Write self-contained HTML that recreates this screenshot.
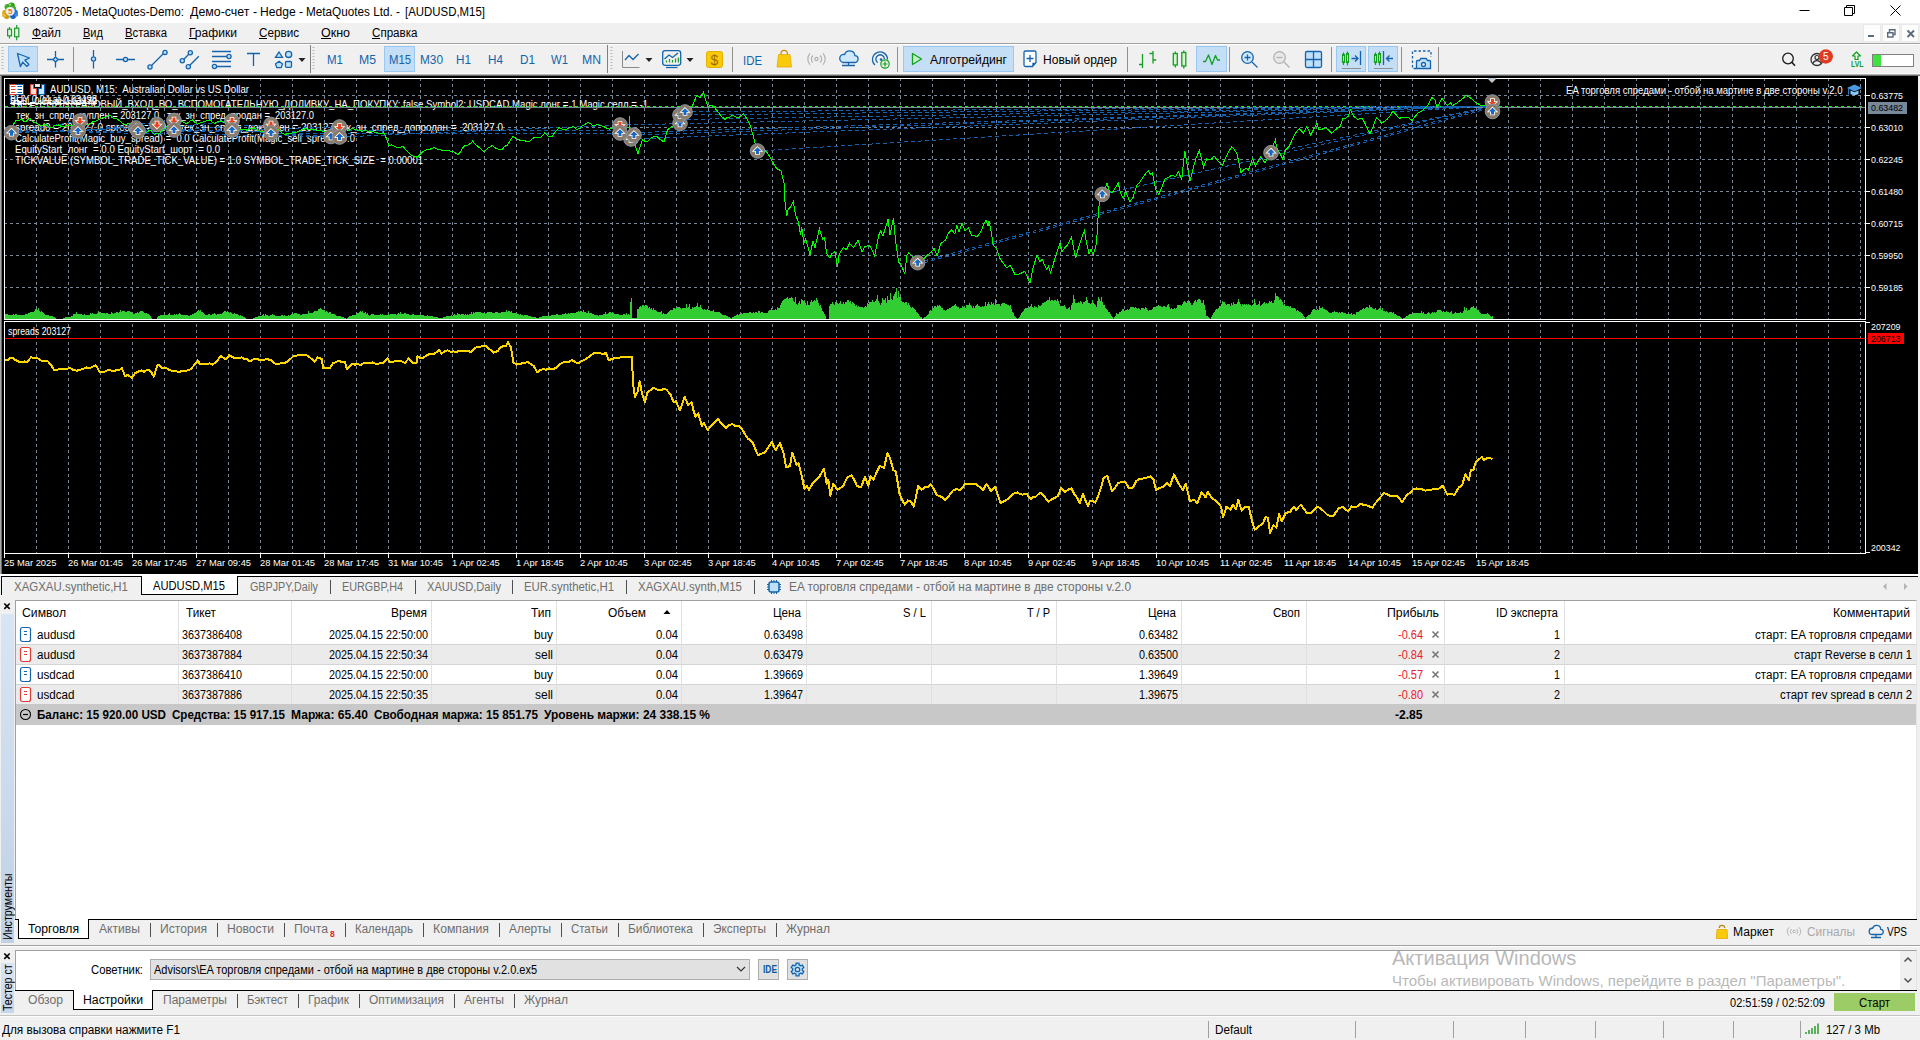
<!DOCTYPE html>
<html><head><meta charset="utf-8"><title>MT5</title>
<style>
*{box-sizing:border-box;margin:0;padding:0}
html,body{width:1920px;height:1040px;overflow:hidden;background:#f0f0f0}
body{position:relative;font-family:"Liberation Sans",sans-serif;font-size:12px;color:#000}
.a{position:absolute;white-space:nowrap;line-height:1}
.t{position:absolute;white-space:pre;line-height:1;transform-origin:0 0}
svg{position:absolute;overflow:visible}
</style></head><body>
<!-- p10_top -->
<div class="a" style="left:0px;top:0px;width:1920px;height:23px;background:#fff;"></div>
<svg style="left:0px;top:0px" width="20" height="22" viewBox="0 0 20 22">
<circle cx="7.5" cy="7" r="3" fill="#3fae2a"/><circle cx="11.5" cy="6" r="3.4" fill="#2ea31c"/><circle cx="13.5" cy="8.5" r="2.6" fill="#3fae2a"/><circle cx="10" cy="4.6" r="1.2" fill="#9be070"/>
<circle cx="5.3" cy="13" r="3.2" fill="#d9a91f"/><circle cx="6.8" cy="16" r="3" fill="#c99a14"/><circle cx="4" cy="15.5" r="2" fill="#e4bb3c"/>
<circle cx="14.5" cy="13" r="3.4" fill="#2572d9"/><circle cx="13" cy="16" r="3" fill="#1b62c4"/><circle cx="16.3" cy="15" r="1.8" fill="#3f8cf0"/>
<circle cx="10.2" cy="11.3" r="4.3" fill="#f4f4f4" stroke="#d8d8d8" stroke-width="0.5"/>
<text x="10.2" y="14.2" font-size="8" font-weight="bold" text-anchor="middle" fill="#e8701a" font-family="Liberation Sans">5</text></svg>
<span class="t" style="left:23.00px;top:5.74px;font-size:12px;color:#000;transform:scaleX(0.9223);">81807205 -</span>
<span class="t" style="left:82.00px;top:5.74px;font-size:12px;color:#000;transform:scaleX(0.9741);">MetaQuotes-Demo:</span>
<span class="t" style="left:190.00px;top:5.74px;font-size:12px;color:#000;transform:scaleX(1.0317);">Демо-счет -</span>
<span class="t" style="left:260.00px;top:5.74px;font-size:12px;color:#000;transform:scaleX(1.0072);">Hedge -</span>
<span class="t" style="left:306.00px;top:5.74px;font-size:12px;color:#000;transform:scaleX(0.9787);">MetaQuotes Ltd. -</span>
<span class="t" style="left:405.00px;top:5.74px;font-size:12px;color:#000;transform:scaleX(0.9522);">[AUDUSD,M15]</span>
<svg style="left:1780px;top:0" width="140" height="23" viewBox="0 0 140 23" fill="none" stroke="#000" stroke-width="1">
<path d="M19.5 10.5h10"/><path d="M64.5 7.5h8v8h-8z M66.5 7.5v-2h8v8h-2"/><path d="M110.5 5.5l10 10M120.5 5.5l-10 10"/></svg>
<div class="a" style="left:0px;top:23px;width:1920px;height:20px;background:#f0f0f0;"></div>
<svg style="left:6px;top:25px" width="14" height="16" viewBox="0 0 14 16" fill="none" stroke="#1c9a2c" stroke-width="1.2">
<path d="M3.5 2v2.200M3.5 10.800v2.700M10.700 0v3.200M10.700 11.800v3.500"/><rect x="1.6" y="4.2" width="3.9" height="6.6" fill="#e4f4e4"/><rect x="8.6" y="3.2" width="4.2" height="8.6" fill="#e4f4e4"/></svg>
<span class="t" style="left:32.00px;top:27.32px;font-size:12.5px;color:#000;transform:scaleX(0.9437);">Файл</span>
<div class="a" style="left:32px;top:38px;width:9px;height:1px;background:#000;"></div>
<span class="t" style="left:83.00px;top:27.32px;font-size:12.5px;color:#000;transform:scaleX(0.8844);">Вид</span>
<div class="a" style="left:83px;top:38px;width:7px;height:1px;background:#000;"></div>
<span class="t" style="left:125.00px;top:27.32px;font-size:12.5px;color:#000;transform:scaleX(0.9040);">Вставка</span>
<div class="a" style="left:125px;top:38px;width:8px;height:1px;background:#000;"></div>
<span class="t" style="left:189.00px;top:27.32px;font-size:12.5px;color:#000;transform:scaleX(0.9660);">Графики</span>
<div class="a" style="left:189px;top:38px;width:7px;height:1px;background:#000;"></div>
<span class="t" style="left:259.00px;top:27.32px;font-size:12.5px;color:#000;transform:scaleX(0.9345);">Сервис</span>
<div class="a" style="left:259px;top:38px;width:8px;height:1px;background:#000;"></div>
<span class="t" style="left:321.00px;top:27.32px;font-size:12.5px;color:#000;">Окно</span>
<div class="a" style="left:321px;top:38px;width:10px;height:1px;background:#000;"></div>
<span class="t" style="left:372.00px;top:27.32px;font-size:12.5px;color:#000;transform:scaleX(0.9279);">Справка</span>
<div class="a" style="left:372px;top:38px;width:8px;height:1px;background:#000;"></div>
<svg style="left:1860px;top:24px" width="60" height="19" viewBox="0 0 60 19">
<rect x="3.5" y="0.5" width="17" height="17" fill="#fdfdfd" stroke="#e9e9e9"/><rect x="22.500" y="0.5" width="17" height="17" fill="#fdfdfd" stroke="#e9e9e9"/><rect x="41.500" y="0.5" width="17" height="17" fill="#fdfdfd" stroke="#e9e9e9"/>
<path d="M8 12h6" stroke="#5a6b80" stroke-width="2"/>
<path d="M27.700 8.700h5.300v4.300h-5.300z M29.500 8.500v-2.800h5.500v4.800h-2" fill="none" stroke="#5a6b80" stroke-width="1.400"/>
<path d="M47.500 6.500l6.500 6.500M54 6.500l-6.500 6.500" stroke="#5a6b80" stroke-width="1.900"/></svg>
<div class="a" style="left:0px;top:43px;width:1920px;height:1px;background:#a0a0a0;"></div>
<div class="a" style="left:0px;top:44px;width:1920px;height:1px;background:#fff;"></div>
<div class="a" style="left:0px;top:45px;width:1920px;height:30px;background:#f0f0f0;"></div>
<!-- p11_toolbar -->
<svg style="left:0;top:0" width="1920" height="76" viewBox="0 0 1920 76" fill="none" stroke-linecap="butt">
<path d="M2.5 47v24" stroke="#b8b8b8" stroke-width="2" stroke-dasharray="1 2"/>
<path d="M313.5 47v24" stroke="#b8b8b8" stroke-width="2" stroke-dasharray="1 2"/>
<path d="M611.5 47v24" stroke="#b8b8b8" stroke-width="2" stroke-dasharray="1 2"/>
<path d="M73.5 47v25" stroke="#909090" stroke-width="1"/>
<path d="M310.5 45v29" stroke="#808080" stroke-width="1"/>
<path d="M607.5 45v29" stroke="#808080" stroke-width="1"/>
<path d="M732.5 47v25" stroke="#909090" stroke-width="1"/>
<path d="M897.5 47v25" stroke="#909090" stroke-width="1"/>
<path d="M1127.5 47v25" stroke="#909090" stroke-width="1"/>
<path d="M1229.5 47v25" stroke="#909090" stroke-width="1"/>
<path d="M1331.5 47v25" stroke="#909090" stroke-width="1"/>
<path d="M1401.5 47v25" stroke="#909090" stroke-width="1"/>
<path d="M1438.5 47v25" stroke="#909090" stroke-width="1"/>
<rect x="8.5" y="46.5" width="29" height="25" fill="#c4def5" stroke="#99c9f2"/>
<rect x="384.5" y="46.5" width="30" height="25" fill="#c4def5" stroke="#99c9f2"/>
<rect x="903.5" y="46.5" width="110" height="25" fill="#c4def5" stroke="#99c9f2"/>
<rect x="1196.5" y="46.5" width="30" height="25" fill="#c4def5" stroke="#99c9f2"/>
<rect x="1336.5" y="46.5" width="29" height="25" fill="#c4def5" stroke="#99c9f2"/>
<rect x="1368.5" y="46.5" width="29" height="25" fill="#c4def5" stroke="#99c9f2"/>
<path d="M17.5 53.5l12 4.5-4.6 2.2 4 4.2-2.2 2-4-4.2-2.3 4.4z" stroke="#1464ad" stroke-width="1.3" stroke-linejoin="round" fill="#bfe0fb"/>
<path d="M55.5 51v5.5M55.5 61.5v6M47 59.5h6M58 59.5h6" stroke="#1464ad" stroke-width="1.3"/><path d="M55.5 57l2.5 2.5-2.5 2.5-2.5-2.5z" stroke="#1464ad" stroke-width="1.3" fill="#bfe0fb"/>
<path d="M93.5 50v6.5M93.5 61.5v7" stroke="#1464ad" stroke-width="1.3"/><circle cx="93.5" cy="59" r="2.1" stroke="#1464ad" stroke-width="1.3" fill="#bfe0fb"/>
<path d="M116 59.5h7M128 59.5h7" stroke="#1464ad" stroke-width="1.3"/><circle cx="125.5" cy="59.5" r="2.1" stroke="#1464ad" stroke-width="1.3" fill="#bfe0fb"/>
<path d="M151.5 65.5l12-12" stroke="#1464ad" stroke-width="1.3"/><circle cx="150" cy="67" r="2.1" stroke="#1464ad" stroke-width="1.3" fill="#bfe0fb"/><circle cx="165" cy="52.5" r="2.1" stroke="#1464ad" stroke-width="1.3" fill="#bfe0fb"/>
<path d="M183.8 59.2l5-5M189.8 65.2l9-9" stroke="#1464ad" stroke-width="1.3"/><circle cx="182.3" cy="60.7" r="2.1" stroke="#1464ad" stroke-width="1.3" fill="#bfe0fb"/><circle cx="190.3" cy="52.7" r="2.1" stroke="#1464ad" stroke-width="1.3" fill="#bfe0fb"/><circle cx="188.3" cy="66.7" r="2.1" stroke="#1464ad" stroke-width="1.3" fill="#bfe0fb"/>
<path d="M212 51.5h19M212 56.5h15M212 61.5h19M217 66.5h14" stroke="#1464ad" stroke-width="1.3"/><circle cx="229" cy="56.5" r="2.1" stroke="#1464ad" stroke-width="1.3" fill="#bfe0fb"/><circle cx="214.5" cy="66.5" r="2.1" stroke="#1464ad" stroke-width="1.3" fill="#bfe0fb"/>
<path d="M247 53.5h13M253.5 53.5v12.5" stroke="#1464ad" stroke-width="1.3"/>
<path d="M279 52l3.500 5.300h-7z" stroke="#1464ad" stroke-width="1.3" fill="#bfe0fb"/><circle cx="288.600" cy="54.400" r="3.100" stroke="#1464ad" stroke-width="1.3" fill="#bfe0fb"/><path d="M279 61.300l3.500 2.600-1.300 3.800h-4.400l-1.300-3.800z" stroke="#1464ad" stroke-width="1.3" fill="#bfe0fb"/><rect x="285.500" y="61.500" width="6" height="5.800" rx="1" stroke="#1464ad" stroke-width="1.3" fill="#bfe0fb"/>
<path d="M298.5 58h7l-3.5 4z" fill="#222"/>
<path d="M622.5 51v16.5h17" stroke="#8a8a8a" stroke-width="1"/><path d="M625 60l4-4.5 4 4 5.5-5.5" stroke="#1464ad" stroke-width="1.3"/>
<path d="M645.5 58h7l-3.5 4z" fill="#222"/>
<rect x="662.7" y="50.7" width="18" height="14.6" rx="2.5" stroke="#1464ad" stroke-width="1.3"/><path d="M666 67.5h11.5" stroke="#1464ad" stroke-width="1.3"/><path d="M664.5 59l4.5-4 3.5 2.5 5.5-4.5" stroke="#1464ad" stroke-width="1.3" stroke-width="1.1"/><path d="M666.5 62.5v-2M669.5 62.5v-3.5M672.5 62.5v-2.5M675.5 62.5v-4M678.3 62.5v-5" stroke="#12a01e" stroke-width="1.2"/>
<path d="M686.5 58h7l-3.5 4z" fill="#222"/>
<rect x="706.5" y="51.5" width="16" height="16" rx="2" fill="#f9ca0a" stroke="#e6b000"/>
<path d="M781 55v-1.500a3.200 3.200 0 0 1 6.400 0v1.500" stroke="#d08a00" stroke-width="1.200"/><path d="M778.500 54.500h11.500l1.500 12.500h-14.500z" fill="#f9ca0a" stroke="#e6a800" stroke-width="0.8"/>
<circle cx="816.5" cy="59" r="1.6" stroke="#b0b0b0" stroke-width="1.2"/><path d="M812.8 55.5a5 5 0 0 0 0 7M820.2 55.5a5 5 0 0 1 0 7M810 53.3a8.5 8.5 0 0 0 0 11.4M823 53.3a8.5 8.5 0 0 1 0 11.4" stroke="#b0b0b0" stroke-width="1.2"/>
<path d="M843 62.5h11.5a3.4 3.4 0 0 0 .4-6.8 5.3 5.3 0 0 0-10.3-1.2 4 4 0 0 0-1.6 8z" stroke="#1464ad" stroke-width="1.3" fill="#cfe8fb"/><path d="M848.5 62.5v3M842 65.5h13" stroke="#1464ad" stroke-width="1.3"/>
<path d="M875 65a7.5 7.5 0 1 1 12.5-5.5M877.6 62.6a4.3 4.3 0 1 1 6.8-3.6" stroke="#1464ad" stroke-width="1.3"/><circle cx="881" cy="59.5" r="1.3" fill="#1464ad"/><circle cx="885" cy="64" r="4.2" fill="#f0f0f0" stroke="#12a01e" stroke-width="1.2"/><path d="M885 61.5v5M882.5 64h5" stroke="#12a01e" stroke-width="1.2"/>
<path d="M912.5 53.5l9 5.5-9 5.5z" stroke="#12a01e" stroke-width="1.3" stroke-linejoin="round" fill="#c4efc4"/>
<path d="M1024 52.5a1.5 1.5 0 0 1 1.5-1.5h9a1.5 1.5 0 0 1 1.5 1.5v10l-3.5 4h-7a1.5 1.5 0 0 1-1.5-1.5z" stroke="#1464ad" stroke-width="1.3" fill="#fff"/><path d="M1030 55v7M1026.5 58.5h7" stroke="#1464ad" stroke-width="1.3"/><path d="M1036 62.5l-3.5 4z" fill="#1464ad"/><path d="M1032.3 66.5v-3.8h3.6z" fill="#1464ad"/>
<path d="M1142.500 54v14M1139 64.500h3.500M1153 51v12.500M1149.500 53.500h3.500M1153 60h3.200" stroke="#12a01e" stroke-width="1.3"/>
<path d="M1175.300 51.500v2M1175.300 65v2.500M1183.800 50.500v2M1183.800 66v2.500" stroke="#12a01e" stroke-width="1.3"/><rect x="1173.300" y="53.500" width="4" height="11.500" stroke="#12a01e" stroke-width="1.3" fill="#d8f5d8"/><rect x="1181.800" y="52.500" width="4" height="13.500" stroke="#12a01e" stroke-width="1.3" fill="#d8f5d8"/>
<path d="M1203 61.500h2.500l3-6.500 3.500 9.500 3.500-9 2 4.500h2.500" stroke="#12a01e" stroke-width="1.3" stroke-linejoin="round"/>
<circle cx="1247.500" cy="57.500" r="5.800" stroke="#1464ad" stroke-width="1.3" fill="#cfe8fb"/><path d="M1252 62l5.500 5.500" stroke="#1464ad" stroke-width="1.3" stroke-width="1.600"/><path d="M1244.500 57.500h6M1247.500 54.500v6" stroke="#1464ad" stroke-width="1.3"/>
<circle cx="1279.500" cy="57.500" r="5.800" stroke="#b0b0b0" stroke-width="1.2" fill="#e8e8e8"/><path d="M1284 62l5.500 5.500" stroke="#b0b0b0" stroke-width="1.2" stroke-width="1.600"/><path d="M1276.500 57.500h6" stroke="#b0b0b0" stroke-width="1.2"/>
<rect x="1305.500" y="51.500" width="16" height="16" rx="1.500" stroke="#1464ad" stroke-width="1.3" fill="#bfe0fb"/><path d="M1313.500 51.500v16M1305.500 59.500h16" stroke="#1464ad" stroke-width="1.3"/>
<rect x="1342.500" y="54.500" width="2" height="8" stroke="#12a01e" stroke-width="1.100" fill="#d8f5d8"/><rect x="1346.500" y="53.500" width="2" height="9" stroke="#12a01e" stroke-width="1.100" fill="#d8f5d8"/><path d="M1343.500 52.500v2M1343.500 62.500v2.500M1347.500 51.500v2M1347.500 62.500v3" stroke="#12a01e" stroke-width="1.100"/><path d="M1351.500 58.500h6.500M1355 55.500l3 3-3 3" stroke="#1464ad" stroke-width="1.3"/><path d="M1360.500 51v14" stroke="#1464ad" stroke-width="1.3"/><path d="M1342 68.500h19" stroke="#909090"/>
<rect x="1374.500" y="54.500" width="2" height="8" stroke="#12a01e" stroke-width="1.100" fill="#d8f5d8"/><rect x="1378.500" y="53.500" width="2" height="9" stroke="#12a01e" stroke-width="1.100" fill="#d8f5d8"/><path d="M1375.500 52.500v2M1375.500 62.500v2.500M1379.500 51.500v2M1379.500 62.500v3" stroke="#12a01e" stroke-width="1.100"/><path d="M1383.500 51v14" stroke="#1464ad" stroke-width="1.3"/><path d="M1386.500 58.500h6.500M1389.500 55.500l-3 3 3 3" stroke="#1464ad" stroke-width="1.3"/><path d="M1374 68.500h19" stroke="#909090"/>
<path d="M1416 68.500h-3.500v-17.500h18.500v6" stroke="#1464ad" stroke-width="1.3" stroke-dasharray="2.500 2"/><path d="M1417.500 60.500h2l1.300-2h5.400l1.300 2h2a1 1 0 0 1 1 1v7h-14v-7a1 1 0 0 1 1-1z" fill="#bfe0fb" stroke="#1464ad" stroke-width="1.3"/><circle cx="1423.500" cy="64.500" r="2" stroke="#1464ad" stroke-width="1.3" fill="#f0f0f0"/>
<circle cx="1788" cy="58.500" r="5.300" stroke="#1a1a1a" stroke-width="1.300"/><path d="M1791.800 62.300l3.200 3.400" stroke="#1a1a1a" stroke-width="1.600"/>
<circle cx="1817" cy="59.500" r="6" stroke="#333" stroke-width="1.3"/><circle cx="1817" cy="57.500" r="2" stroke="#333" stroke-width="1.2"/><path d="M1812.800 63.500a4.500 4.500 0 0 1 8.400 0" stroke="#333" stroke-width="1.2"/><circle cx="1825.800" cy="56.500" r="7.200" fill="#e03a24"/>
<path d="M1856.500 52l4 4h-2.500v3.500h-3v-3.500h-2.500z" stroke="#12a01e" stroke-width="1.200" stroke-linejoin="round"/>
<rect x="1872.500" y="54.500" width="41" height="12" fill="#fff" stroke="#808080"/><rect x="1873" y="55" width="8" height="11" fill="#40e040"/>
</svg>
<span class="t" style="left:327.00px;top:53.40px;font-size:13px;color:#1464ad;transform:scaleX(0.8860);">M1</span>
<span class="t" style="left:359.00px;top:53.40px;font-size:13px;color:#1464ad;transform:scaleX(0.9413);">M5</span>
<span class="t" style="left:389.00px;top:53.40px;font-size:13px;color:#1464ad;transform:scaleX(0.8699);">M15</span>
<span class="t" style="left:420.00px;top:53.40px;font-size:13px;color:#1464ad;transform:scaleX(0.9095);">M30</span>
<span class="t" style="left:456.00px;top:53.40px;font-size:13px;color:#1464ad;transform:scaleX(0.9027);">H1</span>
<span class="t" style="left:488.00px;top:53.40px;font-size:13px;color:#1464ad;transform:scaleX(0.9027);">H4</span>
<span class="t" style="left:520.00px;top:53.40px;font-size:13px;color:#1464ad;transform:scaleX(0.9027);">D1</span>
<span class="t" style="left:551.00px;top:53.40px;font-size:13px;color:#1464ad;transform:scaleX(0.8718);">W1</span>
<span class="t" style="left:582.00px;top:53.40px;font-size:13px;color:#1464ad;transform:scaleX(0.9398);">MN</span>
<span class="t" style="left:743.00px;top:54.74px;font-size:12px;color:#1464ad;transform:scaleX(0.9498);">IDE</span>
<span class="t" style="left:710.60px;top:53.05px;font-size:14px;color:#a06c00;">$</span>
<span class="t" style="left:930.00px;top:54.32px;font-size:12.5px;color:#000;transform:scaleX(0.9754);">Алготрейдинг</span>
<span class="t" style="left:1043.00px;top:54.32px;font-size:12.5px;color:#000;transform:scaleX(0.9626);">Новый ордер</span>
<span class="t" style="left:1823.00px;top:51.17px;font-size:11.5px;color:#fff;transform:scaleX(0.8756);">5</span>
<span class="t" style="left:1850.50px;top:60.00px;font-size:8.5px;color:#12a01e;font-weight:bold;transform:scaleX(0.8105);">LVL</span>
<!-- p20_chart -->
<div class="a" style="left:0px;top:73px;width:1920px;height:1px;background:#f8f8f8;"></div>
<div class="a" style="left:0px;top:74px;width:1920px;height:1px;background:#b4b4b4;"></div>
<div class="a" style="left:0px;top:75px;width:1920px;height:1px;background:#6a6a6a;"></div>
<div class="a" style="left:0px;top:76px;width:1918px;height:498px;background:#000;"></div>
<div class="a" style="left:0px;top:76px;width:1px;height:498px;background:#a8a8a8;"></div>
<div class="a" style="left:1px;top:76px;width:1px;height:498px;background:#6a6a6a;"></div>
<div class="a" style="left:1918px;top:76px;width:2px;height:498px;background:#f4f4f4;"></div>
<svg style="left:0;top:0" width="1920" height="576" viewBox="0 0 1920 576" fill="none" shape-rendering="crispEdges">
<path d="M36.5 78V319M36.5 324V553M68.5 78V319M68.5 324V553M100.5 78V319M100.5 324V553M132.5 78V319M132.5 324V553M164.5 78V319M164.5 324V553M196.5 78V319M196.5 324V553M228.5 78V319M228.5 324V553M260.5 78V319M260.5 324V553M292.5 78V319M292.5 324V553M324.5 78V319M324.5 324V553M356.5 78V319M356.5 324V553M388.5 78V319M388.5 324V553M420.5 78V319M420.5 324V553M452.5 78V319M452.5 324V553M484.5 78V319M484.5 324V553M516.5 78V319M516.5 324V553M548.5 78V319M548.5 324V553M580.5 78V319M580.5 324V553M612.5 78V319M612.5 324V553M644.5 78V319M644.5 324V553M676.5 78V319M676.5 324V553M708.5 78V319M708.5 324V553M740.5 78V319M740.5 324V553M772.5 78V319M772.5 324V553M804.5 78V319M804.5 324V553M836.5 78V319M836.5 324V553M868.5 78V319M868.5 324V553M900.5 78V319M900.5 324V553M932.5 78V319M932.5 324V553M964.5 78V319M964.5 324V553M996.5 78V319M996.5 324V553M1028.5 78V319M1028.5 324V553M1060.5 78V319M1060.5 324V553M1092.5 78V319M1092.5 324V553M1124.5 78V319M1124.5 324V553M1156.5 78V319M1156.5 324V553M1188.5 78V319M1188.5 324V553M1220.5 78V319M1220.5 324V553M1252.5 78V319M1252.5 324V553M1284.5 78V319M1284.5 324V553M1316.5 78V319M1316.5 324V553M1348.5 78V319M1348.5 324V553M1380.5 78V319M1380.5 324V553M1412.5 78V319M1412.5 324V553M1444.5 78V319M1444.5 324V553M1476.5 78V319M1476.5 324V553M1508.5 78V319M1508.5 324V553M1540.5 78V319M1540.5 324V553M1572.5 78V319M1572.5 324V553M1604.5 78V319M1604.5 324V553M1636.5 78V319M1636.5 324V553M1668.5 78V319M1668.5 324V553M1700.5 78V319M1700.5 324V553M1732.5 78V319M1732.5 324V553M1764.5 78V319M1764.5 324V553M1796.5 78V319M1796.5 324V553M1828.5 78V319M1828.5 324V553M1860.5 78V319M1860.5 324V553" stroke="#778899" stroke-dasharray="3 3"/>
<path d="M4 95.5H1865M4 127.5H1865M4 159.5H1865M4 191.5H1865M4 223.5H1865M4 255.5H1865M4 287.5H1865" stroke="#778899" stroke-dasharray="3 3"/>
<path d="M4.5 78.5H1865.5V319.5H4.5z" stroke="#fff"/>
<path d="M4.5 321.5H1865.5V553.5H4.5z" stroke="#fff"/>
<path d="M1866 95.5h4M1866 127.5h4M1866 159.5h4M1866 191.5h4M1866 223.5h4M1866 255.5h4M1866 287.5h4M1866 322.5h4M1866 552.5h4M4.5 553v5M68.5 553v5M132.5 553v5M196.5 553v5M260.5 553v5M324.5 553v5M388.5 553v5M452.5 553v5M516.5 553v5M580.5 553v5M644.5 553v5M708.5 553v5M772.5 553v5M836.5 553v5M900.5 553v5M964.5 553v5M1028.5 553v5M1092.5 553v5M1156.5 553v5M1220.5 553v5M1284.5 553v5M1348.5 553v5M1412.5 553v5M1476.5 553v5" stroke="#fff"/>
</svg>
<span class="t" style="left:1871.00px;top:91.46px;font-size:9.5px;color:#fff;transform:scaleX(0.9320);">0.63775</span>
<span class="t" style="left:1871.00px;top:123.46px;font-size:9.5px;color:#fff;transform:scaleX(0.9320);">0.63010</span>
<span class="t" style="left:1871.00px;top:155.46px;font-size:9.5px;color:#fff;transform:scaleX(0.9320);">0.62245</span>
<span class="t" style="left:1871.00px;top:187.46px;font-size:9.5px;color:#fff;transform:scaleX(0.9320);">0.61480</span>
<span class="t" style="left:1871.00px;top:219.46px;font-size:9.5px;color:#fff;transform:scaleX(0.9320);">0.60715</span>
<span class="t" style="left:1871.00px;top:251.46px;font-size:9.5px;color:#fff;transform:scaleX(0.9320);">0.59950</span>
<span class="t" style="left:1871.00px;top:283.46px;font-size:9.5px;color:#fff;transform:scaleX(0.9320);">0.59185</span>
<div class="a" style="left:1868px;top:102px;width:39px;height:12px;background:#778899;"></div>
<span class="t" style="left:1871.00px;top:103.46px;font-size:9.5px;color:#000;transform:scaleX(0.9320);">0.63482</span>
<span class="t" style="left:1871.00px;top:322.46px;font-size:9.5px;color:#fff;transform:scaleX(0.9307);">207209</span>
<span class="t" style="left:1871.00px;top:543.46px;font-size:9.5px;color:#fff;transform:scaleX(0.9307);">200342</span>
<div class="a" style="left:1868px;top:333px;width:36px;height:11px;background:#ff0000;"></div>
<span class="t" style="left:1871.00px;top:334.46px;font-size:9.5px;color:#000;transform:scaleX(0.9307);">206713</span>
<span class="t" style="left:4.00px;top:558.46px;font-size:9.5px;color:#fff;transform:scaleX(0.9830);">25 Mar 2025</span>
<span class="t" style="left:68.00px;top:558.46px;font-size:9.5px;color:#fff;transform:scaleX(0.9830);">26 Mar 01:45</span>
<span class="t" style="left:132.00px;top:558.46px;font-size:9.5px;color:#fff;transform:scaleX(0.9830);">26 Mar 17:45</span>
<span class="t" style="left:196.00px;top:558.46px;font-size:9.5px;color:#fff;transform:scaleX(0.9830);">27 Mar 09:45</span>
<span class="t" style="left:260.00px;top:558.46px;font-size:9.5px;color:#fff;transform:scaleX(0.9830);">28 Mar 01:45</span>
<span class="t" style="left:324.00px;top:558.46px;font-size:9.5px;color:#fff;transform:scaleX(0.9830);">28 Mar 17:45</span>
<span class="t" style="left:388.00px;top:558.46px;font-size:9.5px;color:#fff;transform:scaleX(0.9830);">31 Mar 10:45</span>
<span class="t" style="left:452.00px;top:558.46px;font-size:9.5px;color:#fff;transform:scaleX(0.9830);">1 Apr 02:45</span>
<span class="t" style="left:516.00px;top:558.46px;font-size:9.5px;color:#fff;transform:scaleX(0.9830);">1 Apr 18:45</span>
<span class="t" style="left:580.00px;top:558.46px;font-size:9.5px;color:#fff;transform:scaleX(0.9830);">2 Apr 10:45</span>
<span class="t" style="left:644.00px;top:558.46px;font-size:9.5px;color:#fff;transform:scaleX(0.9830);">3 Apr 02:45</span>
<span class="t" style="left:708.00px;top:558.46px;font-size:9.5px;color:#fff;transform:scaleX(0.9830);">3 Apr 18:45</span>
<span class="t" style="left:772.00px;top:558.46px;font-size:9.5px;color:#fff;transform:scaleX(0.9830);">4 Apr 10:45</span>
<span class="t" style="left:836.00px;top:558.46px;font-size:9.5px;color:#fff;transform:scaleX(0.9830);">7 Apr 02:45</span>
<span class="t" style="left:900.00px;top:558.46px;font-size:9.5px;color:#fff;transform:scaleX(0.9830);">7 Apr 18:45</span>
<span class="t" style="left:964.00px;top:558.46px;font-size:9.5px;color:#fff;transform:scaleX(0.9830);">8 Apr 10:45</span>
<span class="t" style="left:1028.00px;top:558.46px;font-size:9.5px;color:#fff;transform:scaleX(0.9830);">9 Apr 02:45</span>
<span class="t" style="left:1092.00px;top:558.46px;font-size:9.5px;color:#fff;transform:scaleX(0.9830);">9 Apr 18:45</span>
<span class="t" style="left:1156.00px;top:558.46px;font-size:9.5px;color:#fff;transform:scaleX(0.9830);">10 Apr 10:45</span>
<span class="t" style="left:1220.00px;top:558.46px;font-size:9.5px;color:#fff;transform:scaleX(0.9830);">11 Apr 02:45</span>
<span class="t" style="left:1284.00px;top:558.46px;font-size:9.5px;color:#fff;transform:scaleX(0.9830);">11 Apr 18:45</span>
<span class="t" style="left:1348.00px;top:558.46px;font-size:9.5px;color:#fff;transform:scaleX(0.9830);">14 Apr 10:45</span>
<span class="t" style="left:1412.00px;top:558.46px;font-size:9.5px;color:#fff;transform:scaleX(0.9830);">15 Apr 02:45</span>
<span class="t" style="left:1476.00px;top:558.46px;font-size:9.5px;color:#fff;transform:scaleX(0.9830);">15 Apr 18:45</span>
<!-- p21_lines -->
<span class="t" style="left:50.00px;top:84.31px;font-size:10.5px;color:#fff;transform:scaleX(0.9168);">AUDUSD, M15:  Australian Dollar vs US Dollar</span>
<span class="t" style="left:10.00px;top:93.51px;font-size:10.5px;color:#fff;transform:scaleX(0.8942);">BUY 0.04 at 0.63498</span>
<span class="t" style="left:10.00px;top:95.51px;font-size:10.5px;color:#fff;transform:scaleX(0.8598);">SELL 0.04 at 0.63479</span>
<div class="a" style="left:10px;top:103px;width:87px;height:1px;background:#fff;"></div>
<span class="t" style="left:13.00px;top:99.01px;font-size:10.5px;color:#fff;transform:scaleX(0.9150);">ПС = 15920.0 РАЗОВЫЙ_ВХОД_ВО_ВСПОМОГАТЕЛЬНУЮ_ДОЛИВКУ_НА_ПОКУПКУ: false Symbol2: USDCAD Magic лонг = 1 Magic селл = -1</span>
<span class="t" style="left:16.00px;top:110.01px;font-size:10.5px;color:#fff;transform:scaleX(0.8895);">тек_зн_спред_куплен = 203127.0   тек_зн_спред_продан =  203127.0</span>
<span class="t" style="left:15.00px;top:121.51px;font-size:10.5px;color:#fff;transform:scaleX(0.9383);">spread0 = 203127.0 spread2 = 1.0  0 тек_зн_спред_докуплен = 203127 тек_зн_спред_допродан =  203127.0</span>
<span class="t" style="left:15.00px;top:132.51px;font-size:10.5px;color:#fff;transform:scaleX(0.9025);">CalculateProfit(Magic_buy_spread) =  0.0 CalculateProfit(Magic_sell_spread) 0.0</span>
<span class="t" style="left:15.00px;top:143.51px;font-size:10.5px;color:#fff;transform:scaleX(0.9207);">EquityStart_лонг  = 0.0 EquityStart_шорт  = 0.0</span>
<span class="t" style="left:15.00px;top:154.51px;font-size:10.5px;color:#fff;transform:scaleX(0.9100);">TICKVALUE (SYMBOL_TRADE_TICK_VALUE) = 1.0 SYMBOL_TRADE_TICK_SIZE  = 0.00001</span>
<span class="t" style="left:8.00px;top:325.71px;font-size:10.5px;color:#fff;transform:scaleX(0.8366);">spreads 203127</span>
<span class="t" style="left:1565.50px;top:84.71px;font-size:10.5px;color:#fff;transform:scaleX(0.9125);">EA торговля спредами - отбой на мартине в две стороны v.2.0</span>
<svg style="left:0;top:0" width="1920" height="576" viewBox="0 0 1920 576" fill="none">
<path d="M5 319L5 314L6 314L6 314L7 314L7 314L8 314L8 315L9 315L9 315L10 315L10 315L11 315L11 315L12 315L12 315L13 315L13 314L14 314L14 315L15 315L15 314L16 314L16 314L17 314L17 315L18 315L18 315L19 315L19 315L20 315L20 315L21 315L21 315L22 315L22 315L23 315L23 315L24 315L24 315L25 315L25 314L26 314L26 314L27 314L27 314L28 314L28 313L29 313L29 313L30 313L30 312L31 312L31 312L32 312L32 312L33 312L33 312L34 312L34 311L35 311L35 309L36 309L36 309L37 309L37 310L38 310L38 308L39 308L39 311L40 311L40 312L41 312L41 311L42 311L42 312L43 312L43 313L44 313L44 314L45 314L45 315L46 315L46 315L47 315L47 315L48 315L48 315L49 315L49 316L50 316L50 316L51 316L51 316L52 316L52 316L53 316L53 317L54 317L54 317L55 317L55 318L56 318L56 319L57 319L57 319L58 319L58 319L59 319L59 319L60 319L60 319L61 319L61 319L62 319L62 319L63 319L63 318L64 318L64 318L65 318L65 317L66 317L66 317L67 317L67 317L68 317L68 317L69 317L69 317L70 317L70 317L71 317L71 316L72 316L72 316L73 316L73 314L74 314L74 314L75 314L75 314L76 314L76 312L77 312L77 314L78 314L78 314L79 314L79 314L80 314L80 314L81 314L81 314L82 314L82 315L83 315L83 315L84 315L84 314L85 314L85 315L86 315L86 315L87 315L87 315L88 315L88 315L89 315L89 315L90 315L90 313L91 313L91 314L92 314L92 313L93 313L93 314L94 314L94 314L95 314L95 314L96 314L96 314L97 314L97 313L98 313L98 311L99 311L99 312L100 312L100 313L101 313L101 313L102 313L102 313L103 313L103 313L104 313L104 313L105 313L105 314L106 314L106 313L107 313L107 313L108 313L108 314L109 314L109 314L110 314L110 314L111 314L111 312L112 312L112 313L113 313L113 314L114 314L114 313L115 313L115 313L116 313L116 312L117 312L117 312L118 312L118 313L119 313L119 312L120 312L120 310L121 310L121 312L122 312L122 311L123 311L123 311L124 311L124 311L125 311L125 312L126 312L126 312L127 312L127 311L128 311L128 311L129 311L129 311L130 311L130 312L131 312L131 312L132 312L132 313L133 313L133 314L134 314L134 314L135 314L135 313L136 313L136 313L137 313L137 312L138 312L138 313L139 313L139 312L140 312L140 311L141 311L141 311L142 311L142 311L143 311L143 312L144 312L144 313L145 313L145 313L146 313L146 313L147 313L147 314L148 314L148 314L149 314L149 315L150 315L150 316L151 316L151 318L152 318L152 319L153 319L153 319L154 319L154 319L155 319L155 319L156 319L156 319L157 319L157 317L158 317L158 316L159 316L159 316L160 316L160 315L161 315L161 315L162 315L162 315L163 315L163 315L164 315L164 315L165 315L165 315L166 315L166 315L167 315L167 315L168 315L168 314L169 314L169 313L170 313L170 315L171 315L171 315L172 315L172 315L173 315L173 315L174 315L174 314L175 314L175 315L176 315L176 314L177 314L177 315L178 315L178 314L179 314L179 313L180 313L180 314L181 314L181 315L182 315L182 315L183 315L183 315L184 315L184 315L185 315L185 315L186 315L186 315L187 315L187 315L188 315L188 316L189 316L189 316L190 316L190 315L191 315L191 315L192 315L192 314L193 314L193 314L194 314L194 313L195 313L195 313L196 313L196 312L197 312L197 311L198 311L198 310L199 310L199 311L200 311L200 310L201 310L201 312L202 312L202 312L203 312L203 313L204 313L204 314L205 314L205 315L206 315L206 315L207 315L207 315L208 315L208 314L209 314L209 314L210 314L210 315L211 315L211 315L212 315L212 314L213 314L213 314L214 314L214 313L215 313L215 314L216 314L216 315L217 315L217 314L218 314L218 314L219 314L219 314L220 314L220 314L221 314L221 314L222 314L222 313L223 313L223 312L224 312L224 311L225 311L225 311L226 311L226 312L227 312L227 311L228 311L228 312L229 312L229 313L230 313L230 312L231 312L231 313L232 313L232 314L233 314L233 314L234 314L234 313L235 313L235 314L236 314L236 314L237 314L237 314L238 314L238 315L239 315L239 316L240 316L240 315L241 315L241 316L242 316L242 316L243 316L243 317L244 317L244 317L245 317L245 318L246 318L246 319L247 319L247 319L248 319L248 319L249 319L249 319L250 319L250 319L251 319L251 319L252 319L252 319L253 319L253 318L254 318L254 318L255 318L255 317L256 317L256 317L257 317L257 317L258 317L258 316L259 316L259 316L260 316L260 316L261 316L261 316L262 316L262 315L263 315L263 314L264 314L264 316L265 316L265 314L266 314L266 315L267 315L267 315L268 315L268 316L269 316L269 316L270 316L270 315L271 315L271 315L272 315L272 314L273 314L273 315L274 315L274 315L275 315L275 316L276 316L276 316L277 316L277 316L278 316L278 316L279 316L279 316L280 316L280 316L281 316L281 315L282 315L282 315L283 315L283 316L284 316L284 315L285 315L285 316L286 316L286 316L287 316L287 316L288 316L288 315L289 315L289 316L290 316L290 315L291 315L291 314L292 314L292 314L293 314L293 314L294 314L294 313L295 313L295 313L296 313L296 313L297 313L297 314L298 314L298 314L299 314L299 314L300 314L300 315L301 315L301 315L302 315L302 314L303 314L303 314L304 314L304 314L305 314L305 314L306 314L306 314L307 314L307 314L308 314L308 311L309 311L309 313L310 313L310 313L311 313L311 313L312 313L312 313L313 313L313 312L314 312L314 311L315 311L315 311L316 311L316 311L317 311L317 311L318 311L318 309L319 309L319 309L320 309L320 308L321 308L321 309L322 309L322 310L323 310L323 310L324 310L324 310L325 310L325 312L326 312L326 311L327 311L327 312L328 312L328 313L329 313L329 312L330 312L330 312L331 312L331 314L332 314L332 314L333 314L333 314L334 314L334 314L335 314L335 315L336 315L336 316L337 316L337 316L338 316L338 316L339 316L339 316L340 316L340 316L341 316L341 317L342 317L342 317L343 317L343 317L344 317L344 318L345 318L345 318L346 318L346 319L347 319L347 318L348 318L348 317L349 317L349 316L350 316L350 316L351 316L351 316L352 316L352 315L353 315L353 315L354 315L354 315L355 315L355 315L356 315L356 314L357 314L357 313L358 313L358 313L359 313L359 312L360 312L360 311L361 311L361 312L362 312L362 311L363 311L363 313L364 313L364 313L365 313L365 312L366 312L366 314L367 314L367 313L368 313L368 315L369 315L369 316L370 316L370 315L371 315L371 314L372 314L372 314L373 314L373 314L374 314L374 315L375 315L375 315L376 315L376 315L377 315L377 315L378 315L378 315L379 315L379 315L380 315L380 314L381 314L381 315L382 315L382 314L383 314L383 315L384 315L384 315L385 315L385 315L386 315L386 315L387 315L387 315L388 315L388 314L389 314L389 315L390 315L390 314L391 314L391 314L392 314L392 314L393 314L393 314L394 314L394 314L395 314L395 314L396 314L396 315L397 315L397 314L398 314L398 313L399 313L399 314L400 314L400 312L401 312L401 314L402 314L402 314L403 314L403 314L404 314L404 313L405 313L405 313L406 313L406 314L407 314L407 314L408 314L408 314L409 314L409 315L410 315L410 315L411 315L411 315L412 315L412 314L413 314L413 314L414 314L414 315L415 315L415 315L416 315L416 315L417 315L417 315L418 315L418 315L419 315L419 315L420 315L420 315L421 315L421 315L422 315L422 315L423 315L423 315L424 315L424 316L425 316L425 316L426 316L426 316L427 316L427 315L428 315L428 316L429 316L429 316L430 316L430 316L431 316L431 316L432 316L432 316L433 316L433 317L434 317L434 317L435 317L435 317L436 317L436 317L437 317L437 317L438 317L438 318L439 318L439 318L440 318L440 318L441 318L441 318L442 318L442 318L443 318L443 317L444 317L444 317L445 317L445 317L446 317L446 316L447 316L447 316L448 316L448 316L449 316L449 316L450 316L450 316L451 316L451 315L452 315L452 316L453 316L453 315L454 315L454 314L455 314L455 315L456 315L456 315L457 315L457 313L458 313L458 314L459 314L459 314L460 314L460 315L461 315L461 314L462 314L462 314L463 314L463 314L464 314L464 315L465 315L465 314L466 314L466 315L467 315L467 314L468 314L468 315L469 315L469 314L470 314L470 314L471 314L471 312L472 312L472 314L473 314L473 312L474 312L474 313L475 313L475 312L476 312L476 312L477 312L477 312L478 312L478 312L479 312L479 312L480 312L480 312L481 312L481 313L482 313L482 313L483 313L483 313L484 313L484 313L485 313L485 314L486 314L486 313L487 313L487 312L488 312L488 312L489 312L489 312L490 312L490 312L491 312L491 312L492 312L492 313L493 313L493 313L494 313L494 313L495 313L495 312L496 312L496 312L497 312L497 312L498 312L498 313L499 313L499 313L500 313L500 313L501 313L501 312L502 312L502 312L503 312L503 312L504 312L504 312L505 312L505 312L506 312L506 310L507 310L507 312L508 312L508 311L509 311L509 311L510 311L510 312L511 312L511 311L512 311L512 313L513 313L513 313L514 313L514 313L515 313L515 313L516 313L516 313L517 313L517 314L518 314L518 314L519 314L519 315L520 315L520 314L521 314L521 315L522 315L522 315L523 315L523 316L524 316L524 315L525 315L525 315L526 315L526 315L527 315L527 315L528 315L528 316L529 316L529 316L530 316L530 316L531 316L531 317L532 317L532 317L533 317L533 317L534 317L534 317L535 317L535 317L536 317L536 318L537 318L537 318L538 318L538 318L539 318L539 317L540 317L540 317L541 317L541 317L542 317L542 316L543 316L543 316L544 316L544 316L545 316L545 316L546 316L546 316L547 316L547 316L548 316L548 315L549 315L549 316L550 316L550 316L551 316L551 315L552 315L552 315L553 315L553 315L554 315L554 315L555 315L555 315L556 315L556 314L557 314L557 314L558 314L558 315L559 315L559 315L560 315L560 315L561 315L561 315L562 315L562 314L563 314L563 314L564 314L564 314L565 314L565 313L566 313L566 314L567 314L567 314L568 314L568 313L569 313L569 314L570 314L570 313L571 313L571 313L572 313L572 313L573 313L573 313L574 313L574 313L575 313L575 313L576 313L576 312L577 312L577 312L578 312L578 311L579 311L579 312L580 312L580 311L581 311L581 311L582 311L582 312L583 312L583 310L584 310L584 312L585 312L585 312L586 312L586 313L587 313L587 313L588 313L588 311L589 311L589 313L590 313L590 313L591 313L591 313L592 313L592 314L593 314L593 314L594 314L594 315L595 315L595 315L596 315L596 315L597 315L597 315L598 315L598 316L599 316L599 315L600 315L600 315L601 315L601 315L602 315L602 315L603 315L603 314L604 314L604 314L605 314L605 312L606 312L606 314L607 314L607 314L608 314L608 313L609 313L609 312L610 312L610 312L611 312L611 313L612 313L612 312L613 312L613 313L614 313L614 314L615 314L615 314L616 314L616 314L617 314L617 314L618 314L618 314L619 314L619 315L620 315L620 315L621 315L621 315L622 315L622 315L623 315L623 314L624 314L624 314L625 314L625 315L626 315L626 313L627 313L627 315L628 315L628 314L629 314L629 315L630 315L630 302L631 302L631 298L632 298L632 318L633 318L633 318L634 318L634 318L635 318L635 318L636 318L636 318L637 318L637 309L638 309L638 309L639 309L639 307L640 307L640 306L641 306L641 307L642 307L642 305L643 305L643 305L644 305L644 306L645 306L645 305L646 305L646 305L647 305L647 306L648 306L648 308L649 308L649 307L650 307L650 309L651 309L651 308L652 308L652 310L653 310L653 308L654 308L654 310L655 310L655 310L656 310L656 311L657 311L657 312L658 312L658 312L659 312L659 312L660 312L660 312L661 312L661 311L662 311L662 314L663 314L663 313L664 313L664 314L665 314L665 314L666 314L666 314L667 314L667 313L668 313L668 312L669 312L669 311L670 311L670 310L671 310L671 310L672 310L672 310L673 310L673 308L674 308L674 308L675 308L675 309L676 309L676 308L677 308L677 307L678 307L678 307L679 307L679 307L680 307L680 308L681 308L681 309L682 309L682 308L683 308L683 308L684 308L684 308L685 308L685 308L686 308L686 304L687 304L687 308L688 308L688 307L689 307L689 304L690 304L690 309L691 309L691 309L692 309L692 307L693 307L693 308L694 308L694 307L695 307L695 307L696 307L696 306L697 306L697 303L698 303L698 307L699 307L699 307L700 307L700 305L701 305L701 308L702 308L702 309L703 309L703 310L704 310L704 309L705 309L705 310L706 310L706 310L707 310L707 309L708 309L708 310L709 310L709 310L710 310L710 311L711 311L711 311L712 311L712 311L713 311L713 310L714 310L714 312L715 312L715 312L716 312L716 312L717 312L717 312L718 312L718 312L719 312L719 312L720 312L720 313L721 313L721 314L722 314L722 315L723 315L723 315L724 315L724 315L725 315L725 315L726 315L726 316L727 316L727 316L728 316L728 317L729 317L729 317L730 317L730 318L731 318L731 319L732 319L732 317L733 317L733 317L734 317L734 316L735 316L735 316L736 316L736 315L737 315L737 314L738 314L738 315L739 315L739 314L740 314L740 314L741 314L741 313L742 313L742 314L743 314L743 313L744 313L744 313L745 313L745 313L746 313L746 313L747 313L747 313L748 313L748 313L749 313L749 312L750 312L750 312L751 312L751 313L752 313L752 313L753 313L753 312L754 312L754 313L755 313L755 312L756 312L756 312L757 312L757 313L758 313L758 311L759 311L759 311L760 311L760 313L761 313L761 312L762 312L762 312L763 312L763 313L764 313L764 313L765 313L765 313L766 313L766 313L767 313L767 313L768 313L768 311L769 311L769 310L770 310L770 310L771 310L771 308L772 308L772 310L773 310L773 310L774 310L774 310L775 310L775 309L776 309L776 310L777 310L777 307L778 307L778 308L779 308L779 308L780 308L780 305L781 305L781 303L782 303L782 301L783 301L783 300L784 300L784 299L785 299L785 299L786 299L786 298L787 298L787 297L788 297L788 299L789 299L789 298L790 298L790 298L791 298L791 297L792 297L792 298L793 298L793 301L794 301L794 302L795 302L795 297L796 297L796 304L797 304L797 305L798 305L798 303L799 303L799 301L800 301L800 304L801 304L801 299L802 299L802 300L803 300L803 301L804 301L804 301L805 301L805 303L806 303L806 305L807 305L807 301L808 301L808 305L809 305L809 305L810 305L810 302L811 302L811 300L812 300L812 302L813 302L813 301L814 301L814 300L815 300L815 301L816 301L816 298L817 298L817 300L818 300L818 303L819 303L819 306L820 306L820 305L821 305L821 308L822 308L822 311L823 311L823 312L824 312L824 314L825 314L825 316L826 316L826 319L827 319L827 319L828 319L828 319L829 319L829 306L830 306L830 304L831 304L831 304L832 304L832 302L833 302L833 304L834 304L834 305L835 305L835 302L836 302L836 302L837 302L837 303L838 303L838 304L839 304L839 303L840 303L840 301L841 301L841 304L842 304L842 304L843 304L843 302L844 302L844 304L845 304L845 302L846 302L846 302L847 302L847 300L848 300L848 300L849 300L849 302L850 302L850 301L851 301L851 304L852 304L852 302L853 302L853 303L854 303L854 304L855 304L855 306L856 306L856 305L857 305L857 307L858 307L858 306L859 306L859 307L860 307L860 307L861 307L861 307L862 307L862 307L863 307L863 308L864 308L864 307L865 307L865 306L866 306L866 307L867 307L867 303L868 303L868 304L869 304L869 302L870 302L870 302L871 302L871 302L872 302L872 300L873 300L873 302L874 302L874 302L875 302L875 301L876 301L876 299L877 299L877 295L878 295L878 301L879 301L879 303L880 303L880 305L881 305L881 303L882 303L882 298L883 298L883 300L884 300L884 300L885 300L885 298L886 298L886 303L887 303L887 296L888 296L888 300L889 300L889 300L890 300L890 293L891 293L891 299L892 299L892 300L893 300L893 296L894 296L894 294L895 294L895 292L896 292L896 288L897 288L897 298L898 298L898 291L899 291L899 297L900 297L900 297L901 297L901 301L902 301L902 302L903 302L903 302L904 302L904 303L905 303L905 302L906 302L906 302L907 302L907 305L908 305L908 303L909 303L909 305L910 305L910 307L911 307L911 308L912 308L912 307L913 307L913 308L914 308L914 309L915 309L915 310L916 310L916 312L917 312L917 313L918 313L918 314L919 314L919 316L920 316L920 317L921 317L921 317L922 317L922 319L923 319L923 318L924 318L924 317L925 317L925 317L926 317L926 316L927 316L927 315L928 315L928 314L929 314L929 311L930 311L930 310L931 310L931 311L932 311L932 309L933 309L933 308L934 308L934 306L935 306L935 306L936 306L936 307L937 307L937 305L938 305L938 306L939 306L939 305L940 305L940 306L941 306L941 308L942 308L942 308L943 308L943 310L944 310L944 310L945 310L945 311L946 311L946 310L947 310L947 309L948 309L948 309L949 309L949 308L950 308L950 308L951 308L951 307L952 307L952 306L953 306L953 306L954 306L954 305L955 305L955 304L956 304L956 306L957 306L957 307L958 307L958 307L959 307L959 309L960 309L960 308L961 308L961 308L962 308L962 306L963 306L963 307L964 307L964 307L965 307L965 308L966 308L966 305L967 305L967 305L968 305L968 305L969 305L969 303L970 303L970 305L971 305L971 306L972 306L972 308L973 308L973 306L974 306L974 308L975 308L975 306L976 306L976 305L977 305L977 304L978 304L978 306L979 306L979 306L980 306L980 307L981 307L981 307L982 307L982 306L983 306L983 307L984 307L984 306L985 306L985 302L986 302L986 306L987 306L987 304L988 304L988 302L989 302L989 304L990 304L990 305L991 305L991 302L992 302L992 304L993 304L993 303L994 303L994 305L995 305L995 299L996 299L996 304L997 304L997 304L998 304L998 304L999 304L999 304L1000 304L1000 306L1001 306L1001 304L1002 304L1002 303L1003 303L1003 303L1004 303L1004 303L1005 303L1005 304L1006 304L1006 304L1007 304L1007 305L1008 305L1008 305L1009 305L1009 306L1010 306L1010 305L1011 305L1011 309L1012 309L1012 312L1013 312L1013 313L1014 313L1014 316L1015 316L1015 317L1016 317L1016 318L1017 318L1017 319L1018 319L1018 318L1019 318L1019 317L1020 317L1020 315L1021 315L1021 313L1022 313L1022 312L1023 312L1023 311L1024 311L1024 309L1025 309L1025 308L1026 308L1026 308L1027 308L1027 308L1028 308L1028 309L1029 309L1029 307L1030 307L1030 306L1031 306L1031 304L1032 304L1032 307L1033 307L1033 308L1034 308L1034 306L1035 306L1035 307L1036 307L1036 307L1037 307L1037 308L1038 308L1038 305L1039 305L1039 306L1040 306L1040 306L1041 306L1041 305L1042 305L1042 303L1043 303L1043 303L1044 303L1044 302L1045 302L1045 302L1046 302L1046 301L1047 301L1047 300L1048 300L1048 300L1049 300L1049 297L1050 297L1050 301L1051 301L1051 300L1052 300L1052 300L1053 300L1053 301L1054 301L1054 300L1055 300L1055 300L1056 300L1056 301L1057 301L1057 299L1058 299L1058 301L1059 301L1059 304L1060 304L1060 306L1061 306L1061 306L1062 306L1062 306L1063 306L1063 306L1064 306L1064 305L1065 305L1065 307L1066 307L1066 309L1067 309L1067 309L1068 309L1068 308L1069 308L1069 307L1070 307L1070 310L1071 310L1071 305L1072 305L1072 303L1073 303L1073 295L1074 295L1074 299L1075 299L1075 303L1076 303L1076 303L1077 303L1077 303L1078 303L1078 302L1079 302L1079 303L1080 303L1080 301L1081 301L1081 302L1082 302L1082 304L1083 304L1083 302L1084 302L1084 302L1085 302L1085 301L1086 301L1086 297L1087 297L1087 300L1088 300L1088 303L1089 303L1089 303L1090 303L1090 304L1091 304L1091 303L1092 303L1092 300L1093 300L1093 303L1094 303L1094 304L1095 304L1095 305L1096 305L1096 307L1097 307L1097 301L1098 301L1098 297L1099 297L1099 299L1100 299L1100 301L1101 301L1101 297L1102 297L1102 302L1103 302L1103 305L1104 305L1104 305L1105 305L1105 308L1106 308L1106 309L1107 309L1107 310L1108 310L1108 312L1109 312L1109 312L1110 312L1110 314L1111 314L1111 316L1112 316L1112 317L1113 317L1113 319L1114 319L1114 317L1115 317L1115 316L1116 316L1116 313L1117 313L1117 314L1118 314L1118 314L1119 314L1119 312L1120 312L1120 312L1121 312L1121 311L1122 311L1122 309L1123 309L1123 309L1124 309L1124 311L1125 311L1125 310L1126 310L1126 310L1127 310L1127 309L1128 309L1128 310L1129 310L1129 309L1130 309L1130 307L1131 307L1131 307L1132 307L1132 307L1133 307L1133 307L1134 307L1134 308L1135 308L1135 307L1136 307L1136 308L1137 308L1137 309L1138 309L1138 308L1139 308L1139 309L1140 309L1140 310L1141 310L1141 308L1142 308L1142 308L1143 308L1143 308L1144 308L1144 309L1145 309L1145 307L1146 307L1146 308L1147 308L1147 310L1148 310L1148 311L1149 311L1149 310L1150 310L1150 310L1151 310L1151 310L1152 310L1152 309L1153 309L1153 307L1154 307L1154 307L1155 307L1155 307L1156 307L1156 307L1157 307L1157 306L1158 306L1158 305L1159 305L1159 306L1160 306L1160 306L1161 306L1161 307L1162 307L1162 307L1163 307L1163 306L1164 306L1164 306L1165 306L1165 307L1166 307L1166 307L1167 307L1167 305L1168 305L1168 304L1169 304L1169 307L1170 307L1170 309L1171 309L1171 308L1172 308L1172 309L1173 309L1173 309L1174 309L1174 308L1175 308L1175 309L1176 309L1176 308L1177 308L1177 305L1178 305L1178 305L1179 305L1179 305L1180 305L1180 305L1181 305L1181 306L1182 306L1182 304L1183 304L1183 302L1184 302L1184 301L1185 301L1185 302L1186 302L1186 303L1187 303L1187 301L1188 301L1188 302L1189 302L1189 301L1190 301L1190 303L1191 303L1191 305L1192 305L1192 305L1193 305L1193 303L1194 303L1194 301L1195 301L1195 300L1196 300L1196 302L1197 302L1197 300L1198 300L1198 299L1199 299L1199 299L1200 299L1200 300L1201 300L1201 303L1202 303L1202 303L1203 303L1203 300L1204 300L1204 305L1205 305L1205 310L1206 310L1206 316L1207 316L1207 316L1208 316L1208 317L1209 317L1209 318L1210 318L1210 319L1211 319L1211 317L1212 317L1212 315L1213 315L1213 313L1214 313L1214 312L1215 312L1215 310L1216 310L1216 309L1217 309L1217 309L1218 309L1218 308L1219 308L1219 306L1220 306L1220 306L1221 306L1221 304L1222 304L1222 301L1223 301L1223 302L1224 302L1224 302L1225 302L1225 304L1226 304L1226 305L1227 305L1227 304L1228 304L1228 304L1229 304L1229 304L1230 304L1230 306L1231 306L1231 303L1232 303L1232 305L1233 305L1233 302L1234 302L1234 304L1235 304L1235 304L1236 304L1236 304L1237 304L1237 302L1238 302L1238 299L1239 299L1239 302L1240 302L1240 304L1241 304L1241 306L1242 306L1242 304L1243 304L1243 305L1244 305L1244 304L1245 304L1245 305L1246 305L1246 304L1247 304L1247 305L1248 305L1248 304L1249 304L1249 305L1250 305L1250 305L1251 305L1251 306L1252 306L1252 305L1253 305L1253 304L1254 304L1254 299L1255 299L1255 303L1256 303L1256 305L1257 305L1257 305L1258 305L1258 304L1259 304L1259 301L1260 301L1260 306L1261 306L1261 305L1262 305L1262 304L1263 304L1263 303L1264 303L1264 302L1265 302L1265 304L1266 304L1266 303L1267 303L1267 304L1268 304L1268 303L1269 303L1269 301L1270 301L1270 302L1271 302L1271 301L1272 301L1272 303L1273 303L1273 303L1274 303L1274 300L1275 300L1275 293L1276 293L1276 296L1277 296L1277 296L1278 296L1278 297L1279 297L1279 300L1280 300L1280 299L1281 299L1281 300L1282 300L1282 302L1283 302L1283 305L1284 305L1284 304L1285 304L1285 306L1286 306L1286 306L1287 306L1287 306L1288 306L1288 306L1289 306L1289 307L1290 307L1290 306L1291 306L1291 308L1292 308L1292 308L1293 308L1293 308L1294 308L1294 308L1295 308L1295 309L1296 309L1296 311L1297 311L1297 310L1298 310L1298 311L1299 311L1299 312L1300 312L1300 312L1301 312L1301 313L1302 313L1302 314L1303 314L1303 316L1304 316L1304 317L1305 317L1305 319L1306 319L1306 317L1307 317L1307 316L1308 316L1308 315L1309 315L1309 315L1310 315L1310 314L1311 314L1311 312L1312 312L1312 310L1313 310L1313 309L1314 309L1314 309L1315 309L1315 310L1316 310L1316 310L1317 310L1317 309L1318 309L1318 310L1319 310L1319 306L1320 306L1320 308L1321 308L1321 308L1322 308L1322 307L1323 307L1323 309L1324 309L1324 309L1325 309L1325 310L1326 310L1326 310L1327 310L1327 311L1328 311L1328 312L1329 312L1329 313L1330 313L1330 313L1331 313L1331 313L1332 313L1332 312L1333 312L1333 312L1334 312L1334 311L1335 311L1335 312L1336 312L1336 312L1337 312L1337 312L1338 312L1338 313L1339 313L1339 312L1340 312L1340 313L1341 313L1341 312L1342 312L1342 312L1343 312L1343 313L1344 313L1344 313L1345 313L1345 313L1346 313L1346 314L1347 314L1347 314L1348 314L1348 314L1349 314L1349 314L1350 314L1350 314L1351 314L1351 313L1352 313L1352 315L1353 315L1353 314L1354 314L1354 314L1355 314L1355 315L1356 315L1356 312L1357 312L1357 312L1358 312L1358 312L1359 312L1359 311L1360 311L1360 310L1361 310L1361 310L1362 310L1362 309L1363 309L1363 308L1364 308L1364 309L1365 309L1365 308L1366 308L1366 307L1367 307L1367 307L1368 307L1368 308L1369 308L1369 305L1370 305L1370 307L1371 307L1371 307L1372 307L1372 308L1373 308L1373 309L1374 309L1374 309L1375 309L1375 308L1376 308L1376 310L1377 310L1377 310L1378 310L1378 309L1379 309L1379 308L1380 308L1380 308L1381 308L1381 310L1382 310L1382 308L1383 308L1383 311L1384 311L1384 311L1385 311L1385 312L1386 312L1386 311L1387 311L1387 312L1388 312L1388 313L1389 313L1389 312L1390 312L1390 312L1391 312L1391 312L1392 312L1392 313L1393 313L1393 312L1394 312L1394 314L1395 314L1395 314L1396 314L1396 315L1397 315L1397 316L1398 316L1398 316L1399 316L1399 316L1400 316L1400 317L1401 317L1401 318L1402 318L1402 319L1403 319L1403 318L1404 318L1404 318L1405 318L1405 317L1406 317L1406 316L1407 316L1407 316L1408 316L1408 315L1409 315L1409 314L1410 314L1410 314L1411 314L1411 314L1412 314L1412 314L1413 314L1413 313L1414 313L1414 313L1415 313L1415 313L1416 313L1416 313L1417 313L1417 313L1418 313L1418 313L1419 313L1419 313L1420 313L1420 313L1421 313L1421 311L1422 311L1422 313L1423 313L1423 312L1424 312L1424 314L1425 314L1425 314L1426 314L1426 314L1427 314L1427 313L1428 313L1428 312L1429 312L1429 313L1430 313L1430 314L1431 314L1431 313L1432 313L1432 312L1433 312L1433 313L1434 313L1434 312L1435 312L1435 313L1436 313L1436 312L1437 312L1437 310L1438 310L1438 310L1439 310L1439 310L1440 310L1440 310L1441 310L1441 311L1442 311L1442 312L1443 312L1443 311L1444 311L1444 312L1445 312L1445 312L1446 312L1446 311L1447 311L1447 312L1448 312L1448 312L1449 312L1449 313L1450 313L1450 312L1451 312L1451 311L1452 311L1452 314L1453 314L1453 314L1454 314L1454 313L1455 313L1455 312L1456 312L1456 313L1457 313L1457 313L1458 313L1458 313L1459 313L1459 313L1460 313L1460 312L1461 312L1461 313L1462 313L1462 313L1463 313L1463 311L1464 311L1464 307L1465 307L1465 310L1466 310L1466 308L1467 308L1467 311L1468 311L1468 310L1469 310L1469 310L1470 310L1470 308L1471 308L1471 307L1472 307L1472 307L1473 307L1473 306L1474 306L1474 308L1475 308L1475 308L1476 308L1476 309L1477 309L1477 310L1478 310L1478 310L1479 310L1479 312L1480 312L1480 313L1481 313L1481 314L1482 314L1482 314L1483 314L1483 314L1484 314L1484 314L1485 314L1485 314L1486 314L1486 314L1487 314L1487 313L1488 313L1488 314L1489 314L1489 315L1490 315L1490 316L1491 316L1491 317L1492 317L1492 316L1493 316L1493 319Z" fill="#32cd32" shape-rendering="crispEdges"/>
<path d="M5 107.5H1865" stroke="#778899" shape-rendering="crispEdges"/>
<path d="M5 106.5H1865" stroke="#00ff00" stroke-dasharray="3 3" shape-rendering="crispEdges"/>
<path d="M11.5 132.7L80 121M11.5 132.7L136 128M11.5 132.7L78 131M78 131L157 124.5M78 131L174 120.5M136 128L174 130M138 131L232 121M174 130L232 130M174 130L271 124.5M232 130L271 133M232 130L339.5 127M271 133L339.5 137M5 131L331 136.5M5 132L620 130M339.5 137L620 125M271 133L620 133M620 133L1492 106M634 135L1492 106M631 139L1492 106M620 125L1492 106M680 119.5L1492 106M680 115L1492 106M685 112L1492 106M757.5 151L1492 106M917.7 262.7L1492 106M917.7 264.5L1492 107.5M1102.3 194.4L1492 106M1271 152.7L1492 106" stroke="#1462b0" stroke-width="1" stroke-dasharray="4 3" shape-rendering="crispEdges"/>
<path d="M5.0 135.6L7.5 131.0L10.3 127.8L13.0 125.0L16.3 120.0L19.0 121.0L21.5 119.0L23.5 121.0L25.8 121.8L28.0 119.5L30.0 118.4L32.0 121.0L34.4 122.7L37.5 123.5L41.0 126.0L43.5 124.5L46.4 125.0L49.0 127.0L51.5 127.8L55.0 125.5L58.4 125.0L61.5 126.5L65.0 127.0L67.5 125.0L70.0 125.0L74.0 126.0L78.0 124.0L80.5 124.5L83.0 125.5L86.0 124.0L89.0 124.4L92.5 122.0L96.0 121.0L99.5 119.5L103.0 117.5L106.5 117.0L110.0 115.0L112.0 117.5L114.0 118.4L117.0 119.0L120.0 121.0L122.5 123.5L125.4 125.0L128.0 123.0L130.6 123.5L132.8 125.6L135.0 127.0L137.5 128.8L140.0 130.0L143.0 131.6L146.0 133.0L148.5 131.0L151.0 130.4L153.0 133.0L154.6 134.7L157.0 133.0L159.8 133.0L162.5 130.0L165.0 127.8L169.0 125.0L171.5 124.3L174.0 123.5L178.0 122.0L182.0 121.0L184.5 123.0L187.0 123.5L190.0 121.0L192.4 120.0L195.0 122.5L197.6 124.4L201.0 122.5L204.5 121.8L207.0 120.5L209.6 120.0L212.0 122.0L214.8 123.5L218.0 121.5L221.6 121.0L223.8 122.6L226.0 123.5L229.0 125.7L232.0 126.0L236.0 128.0L238.2 129.5L240.5 129.5L244.0 129.0L247.4 130.4L251.0 128.5L254.3 127.8L257.5 130.0L261.0 131.3L263.5 131.6L266.0 131.0L268.5 130.3L271.0 130.0L275.0 130.5L278.4 129.5L281.5 132.5L285.0 134.7L288.5 133.0L292.0 133.0L295.5 132.5L299.0 131.3L302.5 129.5L305.8 128.7L310.0 129.5L314.4 129.5L318.5 131.0L320.8 130.8L323.0 131.3L326.0 131.5L329.0 132.0L332.0 132.2L335.0 130.5L337.3 130.4L339.7 130.6L342.0 131.0L344.4 130.4L346.8 129.5L349.2 130.8L351.6 128.4L354.0 129.0L357.0 130.0L360.0 130.5L362.3 131.5L364.7 130.3L367.0 131.0L369.3 131.6L371.7 131.4L374.0 132.0L377.0 132.5L380.0 134.0L384.0 133.0L386.5 138.6L389.0 145.4L391.5 144.9L394.0 146.0L396.5 147.4L399.0 147.5L403.0 146.5L407.0 151.0L411.0 155.0L413.8 156.6L416.5 157.0L419.1 155.7L421.7 152.7L424.9 150.2L428.0 149.5L431.0 148.9L434.0 147.5L438.0 149.5L440.2 149.7L442.5 150.6L445.2 150.8L448.0 150.5L450.5 151.2L453.0 151.7L455.5 152.9L458.0 154.8L460.5 152.1L463.0 147.5L465.5 145.3L468.0 145.0L470.4 143.5L472.7 141.0L475.4 144.5L478.0 146.5L481.0 149.1L484.0 151.7L488.0 148.0L490.2 146.9L492.5 145.4L496.0 148.5L500.0 149.6L502.3 149.2L504.7 146.3L507.0 145.4L510.0 141.0L513.0 136.0L517.0 139.0L519.4 140.0L521.7 140.0L524.9 140.8L528.0 142.0L530.3 140.8L532.7 138.5L535.0 137.0L537.5 137.6L540.0 138.0L542.3 135.7L544.6 133.0L548.0 136.0L552.0 137.0L555.0 132.0L559.0 127.7L563.0 129.5L565.2 129.5L567.5 128.8L570.6 127.4L573.8 126.7L577.0 129.8L579.5 128.2L582.0 126.0L585.0 124.3L588.0 122.5L590.2 123.5L592.5 125.6L594.8 125.3L597.0 124.5L601.0 125.6L604.0 126.7L607.0 128.8L610.0 129.1L613.0 127.7L615.5 127.0L618.0 126.5L620.5 127.9L623.0 128.5L626.0 128.1L629.0 127.7L629.6 116.0L630.0 137.0L632.5 141.2L635.0 145.4L638.0 153.8L640.2 146.3L642.5 140.0L646.7 142.0L651.0 138.0L655.0 136.0L657.5 137.0L660.0 139.5L664.0 142.0L667.5 129.8L671.7 126.7L674.9 125.0L678.0 121.5L680.5 120.1L683.0 118.5L685.5 116.3L688.0 114.0L690.2 110.0L692.5 105.8L696.7 95.4L700.0 97.5L703.5 92.3L705.8 100.3L708.0 107.0L711.0 104.8L714.2 107.4L717.5 111.0L721.0 116.0L725.0 119.4L727.3 117.3L729.7 117.1L732.0 115.0L735.0 116.4L738.0 118.0L740.8 116.3L743.5 114.0L747.0 119.0L750.0 124.6L753.0 135.0L755.0 143.0L758.0 145.9L761.0 147.5L764.0 149.6L767.5 153.0L770.4 158.0L772.7 162.0L775.6 167.3L778.2 169.6L780.8 170.4L784.0 183.0L785.0 201.7L786.7 216.3L788.0 210.0L790.6 206.6L793.3 201.7L795.4 214.0L798.5 222.5L800.6 235.0L801.7 226.7L803.8 243.3L805.8 239.0L810.0 254.8L813.0 241.0L815.0 247.5L819.4 228.8L822.5 239.0L824.6 238.0L826.7 253.8L829.8 258.0L831.9 253.8L835.0 251.7L837.5 267.3L839.0 254.8L843.3 247.5L846.5 249.6L849.6 243.3L853.8 247.5L858.0 240.0L862.0 251.7L865.0 246.5L869.4 245.4L872.0 249.7L874.6 255.8L878.8 235.0L880.8 230.8L883.0 236.0L885.5 227.5L888.0 219.4L890.0 235.0L893.3 218.3L895.4 239.0L898.5 262.0L900.6 264.0L904.8 273.5L907.0 254.8L909.0 252.7L913.0 257.0L915.4 260.5L917.7 262.7L920.0 261.8L922.3 258.8L924.6 258.0L927.7 254.7L930.8 252.7L934.0 248.5L937.0 255.8L941.0 243.3L945.4 240.0L948.5 233.0L951.7 229.8L954.8 234.0L956.9 225.6L959.0 231.9L962.0 223.5L965.0 230.8L968.3 227.7L971.5 235.0L974.1 235.5L976.7 237.0L980.8 231.9L983.4 225.4L986.0 220.4L988.0 225.6L989.0 221.5L991.0 230.8L993.3 245.4L996.5 248.5L999.6 258.0L1003.8 264.0L1007.0 268.3L1010.0 265.0L1012.5 269.5L1015.0 274.6L1017.7 274.7L1020.4 273.5L1024.6 271.5L1027.7 277.7L1030.0 283.0L1033.0 268.3L1037.0 254.8L1040.0 262.0L1042.0 259.0L1044.2 264.2L1046.5 269.4L1048.5 266.0L1050.6 272.5L1053.2 264.1L1055.8 255.8L1060.0 243.3L1062.0 251.7L1064.7 247.7L1067.3 245.4L1071.5 237.0L1075.6 258.0L1079.8 243.3L1082.1 236.8L1084.4 230.8L1086.7 243.3L1089.0 253.8L1091.0 249.6L1093.3 254.8L1096.5 243.3L1098.5 210.0L1100.0 199.6L1102.3 194.4L1104.7 189.1L1107.0 183.0L1109.0 190.0L1112.0 193.3L1115.2 188.0L1118.3 183.0L1120.4 193.3L1123.5 198.5L1125.6 191.3L1129.8 201.7L1133.0 197.5L1137.0 185.0L1140.0 181.9L1143.3 176.7L1145.8 173.5L1148.3 170.4L1150.6 174.6L1152.5 173.0L1155.6 189.0L1158.8 194.4L1161.9 187.2L1165.0 178.8L1168.0 177.7L1171.0 175.6L1173.2 175.4L1175.4 176.7L1178.5 171.5L1181.7 179.8L1184.8 150.6L1187.4 166.1L1190.0 180.8L1193.0 169.1L1196.0 158.0L1199.4 150.6L1203.5 167.3L1206.7 159.0L1210.8 160.0L1214.0 155.8L1218.0 161.0L1222.3 165.2L1224.9 159.5L1227.5 153.8L1231.7 146.5L1234.3 149.6L1237.0 153.8L1241.0 172.5L1243.5 170.1L1246.0 168.3L1248.3 170.4L1252.5 159.0L1255.6 166.0L1258.2 161.1L1260.8 156.9L1265.0 163.0L1268.0 157.6L1271.0 152.7L1273.2 145.4L1275.4 140.0L1276.5 147.5L1279.6 152.7L1282.7 159.0L1285.8 149.6L1289.0 146.5L1291.5 141.4L1294.0 136.0L1296.7 131.5L1299.4 128.8L1303.5 133.0L1306.7 126.7L1310.8 135.0L1313.9 128.6L1317.0 123.5L1319.0 129.8L1322.2 129.2L1325.4 127.7L1328.6 129.9L1331.7 133.0L1334.5 130.5L1337.2 128.3L1340.0 126.7L1343.0 118.3L1345.7 118.0L1348.3 116.3L1350.4 110.0L1353.5 116.3L1357.7 119.4L1362.0 118.3L1364.7 122.7L1367.3 129.0L1370.0 134.0L1373.2 126.4L1376.5 117.3L1379.1 119.8L1381.7 123.5L1384.3 121.3L1387.0 119.4L1390.0 115.8L1393.0 111.0L1396.2 114.9L1399.4 118.3L1402.5 117.5L1405.6 117.3L1408.8 117.9L1412.0 120.4L1415.0 116.6L1418.0 113.0L1422.3 111.0L1424.9 108.1L1427.5 105.8L1431.7 97.5L1434.8 99.6L1437.0 107.0L1439.5 103.2L1442.0 98.5L1444.7 101.7L1447.3 105.8L1450.4 102.7L1452.5 105.8L1455.7 103.6L1458.8 101.7L1461.2 99.8L1463.6 97.9L1466.0 95.0L1470.0 97.5L1472.7 99.8L1475.4 102.7L1478.6 104.0L1481.7 105.8L1486.0 105.8L1489.0 105.6L1492.0 105.0" stroke="#00ff00" stroke-width="1" stroke-linejoin="miter" shape-rendering="crispEdges"/>
<g transform="translate(11.5 132.7)"><circle r="7.3" fill="#8b7a67" stroke="#8496a8" stroke-width="1"/><path d="M0 -3.8L3.8 0H1.5V3H-1.5V0H-3.8Z" fill="#1668c4" stroke="#fff" stroke-width="1.6" paint-order="stroke" stroke-linejoin="miter"/></g>
<g transform="translate(80.0 121.0)"><circle r="7.3" fill="#8b7a67" stroke="#8496a8" stroke-width="1"/><path d="M0 3.8L3.8 0H1.5V-3H-1.5V0H-3.8Z" fill="#e8431f" stroke="#fff" stroke-width="1.6" paint-order="stroke" stroke-linejoin="miter"/></g>
<g transform="translate(78.0 131.0)"><circle r="7.3" fill="#8b7a67" stroke="#8496a8" stroke-width="1"/><path d="M0 -3.8L3.8 0H1.5V3H-1.5V0H-3.8Z" fill="#1668c4" stroke="#fff" stroke-width="1.6" paint-order="stroke" stroke-linejoin="miter"/></g>
<g transform="translate(136.0 128.0)"><circle r="7.3" fill="#8b7a67" stroke="#8496a8" stroke-width="1"/><path d="M0 -3.8L3.8 0H1.5V3H-1.5V0H-3.8Z" fill="#1668c4" stroke="#fff" stroke-width="1.6" paint-order="stroke" stroke-linejoin="miter"/></g>
<g transform="translate(138.0 131.0)"><circle r="7.3" fill="#8b7a67" stroke="#8496a8" stroke-width="1"/><path d="M0 -3.8L3.8 0H1.5V3H-1.5V0H-3.8Z" fill="#1668c4" stroke="#fff" stroke-width="1.6" paint-order="stroke" stroke-linejoin="miter"/></g>
<g transform="translate(157.0 124.5)"><circle r="7.3" fill="#8b7a67" stroke="#8496a8" stroke-width="1"/><path d="M0 3.8L3.8 0H1.5V-3H-1.5V0H-3.8Z" fill="#e8431f" stroke="#fff" stroke-width="1.6" paint-order="stroke" stroke-linejoin="miter"/></g>
<g transform="translate(174.0 120.5)"><circle r="7.3" fill="#8b7a67" stroke="#8496a8" stroke-width="1"/><path d="M0 3.8L3.8 0H1.5V-3H-1.5V0H-3.8Z" fill="#e8431f" stroke="#fff" stroke-width="1.6" paint-order="stroke" stroke-linejoin="miter"/></g>
<g transform="translate(174.0 130.0)"><circle r="7.3" fill="#8b7a67" stroke="#8496a8" stroke-width="1"/><path d="M0 -3.8L3.8 0H1.5V3H-1.5V0H-3.8Z" fill="#1668c4" stroke="#fff" stroke-width="1.6" paint-order="stroke" stroke-linejoin="miter"/></g>
<g transform="translate(232.0 121.0)"><circle r="7.3" fill="#8b7a67" stroke="#8496a8" stroke-width="1"/><path d="M0 3.8L3.8 0H1.5V-3H-1.5V0H-3.8Z" fill="#e8431f" stroke="#fff" stroke-width="1.6" paint-order="stroke" stroke-linejoin="miter"/></g>
<g transform="translate(232.0 130.0)"><circle r="7.3" fill="#8b7a67" stroke="#8496a8" stroke-width="1"/><path d="M0 -3.8L3.8 0H1.5V3H-1.5V0H-3.8Z" fill="#1668c4" stroke="#fff" stroke-width="1.6" paint-order="stroke" stroke-linejoin="miter"/></g>
<g transform="translate(271.0 124.5)"><circle r="7.3" fill="#8b7a67" stroke="#8496a8" stroke-width="1"/><path d="M0 3.8L3.8 0H1.5V-3H-1.5V0H-3.8Z" fill="#e8431f" stroke="#fff" stroke-width="1.6" paint-order="stroke" stroke-linejoin="miter"/></g>
<g transform="translate(271.0 133.0)"><circle r="7.3" fill="#8b7a67" stroke="#8496a8" stroke-width="1"/><path d="M0 -3.8L3.8 0H1.5V3H-1.5V0H-3.8Z" fill="#1668c4" stroke="#fff" stroke-width="1.6" paint-order="stroke" stroke-linejoin="miter"/></g>
<g transform="translate(331.0 136.5)"><circle r="7.3" fill="#8b7a67" stroke="#8496a8" stroke-width="1"/><path d="M0 -3.8L3.8 0H1.5V3H-1.5V0H-3.8Z" fill="#1668c4" stroke="#fff" stroke-width="1.6" paint-order="stroke" stroke-linejoin="miter"/></g>
<g transform="translate(339.5 127.0)"><circle r="7.3" fill="#8b7a67" stroke="#8496a8" stroke-width="1"/><path d="M0 3.8L3.8 0H1.5V-3H-1.5V0H-3.8Z" fill="#e8431f" stroke="#fff" stroke-width="1.6" paint-order="stroke" stroke-linejoin="miter"/></g>
<g transform="translate(339.5 137.0)"><circle r="7.3" fill="#8b7a67" stroke="#8496a8" stroke-width="1"/><path d="M0 -3.8L3.8 0H1.5V3H-1.5V0H-3.8Z" fill="#1668c4" stroke="#fff" stroke-width="1.6" paint-order="stroke" stroke-linejoin="miter"/></g>
<g transform="translate(620.0 125.0)"><circle r="7.3" fill="#8b7a67" stroke="#8496a8" stroke-width="1"/><path d="M0 3.8L3.8 0H1.5V-3H-1.5V0H-3.8Z" fill="#e8431f" stroke="#fff" stroke-width="1.6" paint-order="stroke" stroke-linejoin="miter"/></g>
<g transform="translate(631.0 139.0)"><circle r="7.3" fill="#8b7a67" stroke="#8496a8" stroke-width="1"/><path d="M0 -3.8L3.8 0H1.5V3H-1.5V0H-3.8Z" fill="#1668c4" stroke="#fff" stroke-width="1.6" paint-order="stroke" stroke-linejoin="miter"/></g>
<g transform="translate(620.0 133.0)"><circle r="7.3" fill="#8b7a67" stroke="#8496a8" stroke-width="1"/><path d="M0 -3.8L3.8 0H1.5V3H-1.5V0H-3.8Z" fill="#1668c4" stroke="#fff" stroke-width="1.6" paint-order="stroke" stroke-linejoin="miter"/></g>
<g transform="translate(634.0 135.0)"><circle r="7.3" fill="#8b7a67" stroke="#8496a8" stroke-width="1"/><path d="M0 -3.8L3.8 0H1.5V3H-1.5V0H-3.8Z" fill="#1668c4" stroke="#fff" stroke-width="1.6" paint-order="stroke" stroke-linejoin="miter"/></g>
<g transform="translate(680.0 123.5)"><circle r="7.3" fill="#8b7a67" stroke="#8496a8" stroke-width="1"/><path d="M0 -3.8L3.8 0H1.5V3H-1.5V0H-3.8Z" fill="#1668c4" stroke="#fff" stroke-width="1.6" paint-order="stroke" stroke-linejoin="miter"/></g>
<g transform="translate(680.0 115.0)"><circle r="7.3" fill="#8b7a67" stroke="#8496a8" stroke-width="1"/><path d="M0 -3.8L3.8 0H1.5V3H-1.5V0H-3.8Z" fill="#1668c4" stroke="#fff" stroke-width="1.6" paint-order="stroke" stroke-linejoin="miter"/></g>
<g transform="translate(685.0 112.0)"><circle r="7.3" fill="#8b7a67" stroke="#8496a8" stroke-width="1"/><path d="M0 -3.8L3.8 0H1.5V3H-1.5V0H-3.8Z" fill="#1668c4" stroke="#fff" stroke-width="1.6" paint-order="stroke" stroke-linejoin="miter"/></g>
<g transform="translate(757.5 151.0)"><circle r="7.3" fill="#8b7a67" stroke="#8496a8" stroke-width="1"/><path d="M0 -3.8L3.8 0H1.5V3H-1.5V0H-3.8Z" fill="#1668c4" stroke="#fff" stroke-width="1.6" paint-order="stroke" stroke-linejoin="miter"/></g>
<g transform="translate(917.7 262.7)"><circle r="7.3" fill="#8b7a67" stroke="#8496a8" stroke-width="1"/><path d="M0 -3.8L3.8 0H1.5V3H-1.5V0H-3.8Z" fill="#1668c4" stroke="#fff" stroke-width="1.6" paint-order="stroke" stroke-linejoin="miter"/></g>
<g transform="translate(1102.3 194.4)"><circle r="7.3" fill="#8b7a67" stroke="#8496a8" stroke-width="1"/><path d="M0 -3.8L3.8 0H1.5V3H-1.5V0H-3.8Z" fill="#1668c4" stroke="#fff" stroke-width="1.6" paint-order="stroke" stroke-linejoin="miter"/></g>
<g transform="translate(1271.0 152.7)"><circle r="7.3" fill="#8b7a67" stroke="#8496a8" stroke-width="1"/><path d="M0 -3.8L3.8 0H1.5V3H-1.5V0H-3.8Z" fill="#1668c4" stroke="#fff" stroke-width="1.6" paint-order="stroke" stroke-linejoin="miter"/></g>
<g transform="translate(1492.5 102.0)"><circle r="7.3" fill="#8b7a67" stroke="#8496a8" stroke-width="1"/><path d="M0 3.8L3.8 0H1.5V-3H-1.5V0H-3.8Z" fill="#e8431f" stroke="#fff" stroke-width="1.6" paint-order="stroke" stroke-linejoin="miter"/></g>
<g transform="translate(1492.5 111.5)"><circle r="7.3" fill="#8b7a67" stroke="#8496a8" stroke-width="1"/><path d="M0 -3.8L3.8 0H1.5V3H-1.5V0H-3.8Z" fill="#1668c4" stroke="#fff" stroke-width="1.6" paint-order="stroke" stroke-linejoin="miter"/></g>
<path d="M5 338.5H1865" stroke="#ff0000" shape-rendering="crispEdges"/>
<path d="M5.0 360.0L7.5 360.1L10.0 358.1L12.5 358.0L16.7 360.8L19.3 361.9L21.9 361.8L24.4 361.5L27.0 362.0L31.0 357.3L34.2 358.1L37.5 358.3L41.7 360.8L44.9 360.8L48.0 361.5L51.0 364.9L54.0 369.8L56.8 369.9L59.7 368.9L62.5 368.8L65.3 368.7L68.0 368.5L70.8 368.3L74.0 370.4L77.1 370.6L80.2 369.8L83.3 368.8L86.1 367.4L88.9 368.0L91.7 367.3L95.8 365.2L100.0 372.5L104.0 371.9L108.3 369.8L110.9 370.5L113.5 371.3L116.3 370.2L119.1 369.9L121.9 368.3L125.0 376.0L128.0 375.0L131.9 378.0L135.4 372.9L138.6 371.5L141.7 370.4L143.8 371.9L148.0 369.4L151.0 371.9L153.8 376.7L157.3 365.6L159.4 365.0L161.5 367.7L164.1 368.0L166.7 368.3L169.8 370.3L173.0 370.8L176.0 371.2L179.0 371.9L181.9 371.2L184.8 370.6L187.7 370.5L190.6 369.2L194.3 365.1L198.0 360.4L200.0 364.2L202.5 364.3L205.0 363.5L207.5 363.7L210.0 363.4L212.5 364.6L216.7 361.5L220.8 355.8L223.4 357.9L226.0 359.4L229.0 355.2L232.2 356.8L235.4 358.3L238.6 358.3L241.7 357.3L244.5 359.2L247.2 359.4L250.0 361.5L252.5 359.7L255.0 359.0L257.5 358.7L260.0 360.5L262.5 360.4L265.3 359.5L268.0 359.4L270.8 360.0L273.4 362.6L276.0 364.2L278.8 364.1L281.6 362.9L284.4 363.5L287.5 361.3L290.7 358.7L293.8 355.8L296.9 355.5L299.9 354.5L302.9 355.4L306.0 354.8L310.4 357.9L314.6 361.5L317.7 357.3L321.9 359.0L323.0 368.3L326.5 367.9L330.0 367.7L333.3 363.0L335.9 362.1L338.5 360.8L341.6 362.0L344.8 361.5L346.9 368.8L349.4 366.7L352.0 363.5L354.8 364.7L357.6 364.0L360.4 365.2L364.6 362.5L367.2 362.5L369.8 363.0L372.4 362.4L375.0 363.5L377.8 364.2L380.5 362.8L383.3 363.0L387.3 358.3L390.4 362.5L393.0 361.6L395.6 361.3L398.2 360.8L400.8 360.8L405.0 363.0L408.8 358.3L412.3 362.5L416.5 363.0L417.5 356.3L420.6 358.3L423.4 357.6L426.2 355.7L429.0 354.2L431.5 354.2L434.0 354.2L436.7 352.0L439.4 350.0L441.5 353.8L444.6 351.3L447.7 350.4L450.8 352.0L453.5 351.3L456.3 352.0L459.0 351.0L461.8 351.4L464.7 351.4L467.5 350.6L470.6 352.0L474.8 348.0L477.6 347.1L480.4 346.6L483.2 345.9L486.0 346.3L488.5 348.5L491.0 350.3L493.5 352.7L497.7 351.0L500.8 346.9L503.4 346.3L506.0 345.8L508.0 342.0L511.0 347.5L513.3 362.5L516.5 364.6L520.1 363.8L523.8 363.0L528.0 362.0L531.0 364.3L534.0 366.3L537.3 372.5L540.4 369.8L543.3 369.3L546.2 369.7L549.2 368.4L552.1 369.4L555.0 368.3L557.8 366.5L560.5 363.6L563.3 362.5L565.9 361.9L568.5 362.0L571.7 360.0L574.9 361.8L578.0 363.5L581.5 361.3L585.0 359.4L588.2 357.4L591.4 354.8L594.6 353.0L597.7 352.8L600.8 353.5L603.4 353.8L606.0 353.0L608.8 360.4L611.6 359.0L614.4 358.3L618.0 358.0L621.7 356.9L624.3 357.5L626.9 357.3L629.4 357.1L632.0 357.3L633.0 383.3L635.0 396.9L637.3 392.7L639.8 381.3L642.0 393.8L645.0 401.7L647.7 391.7L650.4 390.4L653.0 387.5L655.5 388.7L658.0 390.0L660.8 390.5L663.7 388.9L666.5 389.6L670.6 394.8L673.8 402.5L675.8 401.0L680.0 410.4L684.6 396.9L688.3 405.2L691.5 402.0L693.5 410.4L695.6 416.7L698.3 413.5L701.9 426.0L704.0 423.0L707.5 430.2L710.4 427.0L712.9 424.2L715.4 421.9L717.9 419.0L721.7 424.0L725.8 428.0L728.9 425.2L732.0 424.0L735.2 426.0L738.3 425.9L741.5 428.0L744.6 433.4L747.7 438.5L750.3 440.0L752.9 442.7L755.5 449.6L758.0 455.0L761.2 453.9L764.4 452.5L766.9 449.5L769.5 445.5L772.0 442.0L775.6 450.4L780.0 443.0L784.0 454.6L786.0 467.5L790.0 466.0L792.3 452.5L796.5 465.0L798.5 463.0L801.7 475.4L804.4 489.0L807.0 485.8L809.0 490.0L813.0 482.7L816.2 479.9L819.4 476.5L824.0 469.0L826.7 483.8L828.3 479.6L830.4 495.8L833.3 483.8L837.5 489.6L840.4 488.0L843.3 485.8L847.5 477.0L851.7 475.4L854.4 480.2L857.0 485.8L861.0 487.5L865.0 476.5L868.3 485.8L870.4 476.5L873.5 479.6L876.6 472.3L879.8 466.0L884.0 468.0L887.5 453.0L890.0 457.7L893.3 470.2L895.8 471.3L899.6 494.0L902.2 499.9L904.8 504.6L908.0 500.4L911.0 501.5L913.8 506.7L918.3 485.8L921.5 490.0L924.6 487.5L927.7 487.0L930.8 484.4L933.9 489.3L937.0 495.2L939.8 496.1L942.6 497.7L945.4 500.0L949.0 495.8L952.7 490.6L957.0 489.0L960.0 490.4L962.5 487.9L965.0 483.8L967.7 483.7L970.4 484.0L973.0 484.2L975.6 483.8L979.3 486.7L983.0 490.4L986.5 483.8L991.0 491.0L995.4 487.0L998.0 495.7L1000.6 503.0L1004.3 501.2L1008.0 498.8L1011.5 495.1L1015.0 492.7L1017.5 492.5L1020.0 494.3L1022.5 494.6L1026.7 493.8L1030.8 499.4L1033.3 496.9L1035.9 496.7L1038.5 494.0L1041.0 492.7L1043.5 495.2L1046.0 498.7L1048.5 501.5L1051.7 499.3L1054.8 497.8L1058.0 495.8L1061.0 488.3L1065.0 492.0L1068.2 489.5L1071.5 488.3L1074.3 493.9L1077.0 497.8L1079.8 503.0L1083.0 494.0L1085.5 500.6L1088.0 506.0L1090.0 501.0L1092.7 501.1L1095.4 502.5L1098.0 496.3L1100.6 489.0L1103.8 477.5L1107.3 476.0L1112.0 491.0L1115.2 487.7L1118.3 482.7L1121.9 482.3L1125.6 482.3L1128.8 488.0L1133.0 487.5L1136.0 481.3L1138.8 479.4L1141.6 478.9L1144.4 478.0L1147.4 477.5L1150.4 476.5L1153.5 479.6L1156.0 490.0L1159.5 488.0L1163.0 486.9L1167.0 482.7L1170.0 485.8L1174.0 474.4L1177.5 481.7L1180.1 485.9L1182.7 490.0L1185.8 483.8L1190.0 501.5L1192.5 500.2L1195.0 500.4L1197.3 503.5L1201.5 492.0L1205.6 497.3L1207.7 492.0L1212.0 498.3L1215.0 500.3L1218.0 502.5L1221.0 506.7L1223.3 517.0L1226.5 506.7L1230.6 509.8L1232.7 504.6L1236.0 508.8L1238.3 500.0L1241.7 510.8L1245.0 506.7L1248.8 506.7L1251.5 519.0L1254.6 529.6L1257.3 527.9L1260.0 525.4L1263.0 523.3L1265.6 517.0L1268.0 518.0L1270.0 532.7L1273.3 525.4L1276.5 527.5L1279.0 514.0L1281.7 521.3L1285.8 512.9L1290.0 511.9L1293.8 506.7L1296.0 509.8L1300.8 504.6L1303.8 508.6L1306.7 512.9L1310.8 513.3L1313.9 510.3L1317.0 506.7L1320.2 508.1L1323.3 510.8L1327.5 515.0L1330.7 515.9L1333.8 515.6L1336.4 511.3L1339.0 508.3L1343.0 506.7L1345.7 509.8L1348.3 511.3L1351.5 506.3L1354.1 507.4L1356.7 506.7L1360.8 503.5L1363.4 505.0L1366.0 505.0L1369.2 506.4L1372.3 507.7L1375.9 502.6L1379.6 498.3L1383.8 493.0L1387.4 494.4L1391.0 496.3L1394.2 496.5L1397.3 495.8L1402.0 502.0L1404.8 498.1L1407.7 494.2L1410.3 492.6L1413.0 489.4L1416.5 488.5L1420.0 489.0L1422.5 489.4L1425.0 490.6L1427.5 490.4L1430.7 489.9L1433.8 489.0L1436.4 488.8L1439.0 488.5L1442.7 485.8L1447.3 494.6L1450.9 494.0L1454.6 494.8L1458.8 487.5L1462.0 485.4L1465.4 474.4L1468.8 480.0L1471.0 470.2L1473.3 470.2L1475.8 461.9L1478.5 459.8L1481.7 457.0L1483.8 459.8L1487.0 458.3L1489.8 458.0L1492.5 459.0" stroke="#ffd700" stroke-width="2" stroke-linejoin="round" shape-rendering="crispEdges"/>
<path d="M1487 78h10l-5 5z" fill="#c0c8d0"/>
<rect x="9.5" y="84.5" width="14" height="10" fill="#fff"/><path d="M16.500 84.500H9.500V94.500H16.500" stroke="#e03c2c"/><path d="M16.500 84.500H23.500V94.500H16.500" stroke="#0060b0"/><path d="M11 86.500h4.500M11 89.500h4.500M11 92.500h4.500" stroke="#e03c2c" stroke-width="1.200"/><path d="M17.500 86.500h4.500M17.500 89.500h4.500M17.500 92.500h4.500" stroke="#0060b0" stroke-width="1.200"/>
<path d="M30.500 84.500h3v4h3v6h-6z" fill="#ffe0d8" stroke="#e03c2c"/><path d="M41.500 84.500h3v10h-6v-6h3z" fill="#c8e8ff" stroke="#0060b0"/><rect x="35" y="84" width="5" height="3" fill="#d8d8d8"/><path d="M36 85.500h3" stroke="#fff"/>
<path d="M1847 88l7.500-3.500 7.500 3.500-7.500 3.500z" fill="#4a9ae0"/><path d="M1850.500 90.500v3.500c2 1.500 6 1.500 8 0v-3.500l-4 1.800z" fill="#8cc8f4"/><path d="M1848.500 88.500v6" stroke="#2a7ad0"/>
</svg>
<!-- p30_tabs -->
<div class="a" style="left:0px;top:574px;width:1920px;height:2px;background:#fff;"></div>
<div class="a" style="left:0px;top:576px;width:1920px;height:24px;background:#f0f0f0;"></div>
<div class="a" style="left:1px;top:576px;width:1917px;height:1px;background:#000;"></div>
<div class="a" style="left:1px;top:576px;width:1px;height:19px;background:#000;"></div>
<div class="a" style="left:141px;top:576px;width:97px;height:19px;background:#fff;border:1px solid #000;border-top:none;"></div>
<span class="t" style="left:14.00px;top:581.32px;font-size:12.5px;color:#6e6e6e;transform:scaleX(0.9167);">XAGXAU.synthetic,H1</span>
<span class="t" style="left:153.00px;top:580.32px;font-size:12.5px;color:#000;transform:scaleX(0.8936);">AUDUSD,M15</span>
<span class="t" style="left:250.00px;top:581.32px;font-size:12.5px;color:#6e6e6e;transform:scaleX(0.8611);">GBPJPY,Daily</span>
<span class="t" style="left:342.00px;top:581.32px;font-size:12.5px;color:#6e6e6e;transform:scaleX(0.8637);">EURGBP,H4</span>
<span class="t" style="left:427.00px;top:581.32px;font-size:12.5px;color:#6e6e6e;transform:scaleX(0.8879);">XAUUSD,Daily</span>
<span class="t" style="left:524.00px;top:581.32px;font-size:12.5px;color:#6e6e6e;transform:scaleX(0.9124);">EUR.synthetic,H1</span>
<span class="t" style="left:638.00px;top:581.32px;font-size:12.5px;color:#6e6e6e;transform:scaleX(0.9184);">XAGXAU.synth,M15</span>
<div class="a" style="left:330px;top:580px;width:1px;height:14px;background:#505050;"></div>
<div class="a" style="left:415px;top:580px;width:1px;height:14px;background:#505050;"></div>
<div class="a" style="left:512px;top:580px;width:1px;height:14px;background:#505050;"></div>
<div class="a" style="left:626px;top:580px;width:1px;height:14px;background:#505050;"></div>
<div class="a" style="left:754px;top:580px;width:1px;height:14px;background:#505050;"></div>
<svg style="left:766px;top:579px" width="16" height="16" viewBox="0 0 16 16" fill="none" stroke="#1464ad"><rect x="3" y="3" width="10" height="10" rx="2" stroke-width="1.500" fill="#bfe0fb"/><path d="M5.500 1v2M8 1v2M10.500 1v2M5.500 13v2M8 13v2M10.500 13v2M1 5.500h2M1 8h2M1 10.500h2M13 5.500h2M13 8h2M13 10.500h2" stroke-width="1"/></svg>
<span class="t" style="left:789.00px;top:581.32px;font-size:12.5px;color:#6e6e6e;transform:scaleX(0.9480);">EA торговля спредами - отбой на мартине в две стороны v.2.0</span>
<svg style="left:1880px;top:580px" width="32" height="14" viewBox="0 0 32 14"><path d="M6.500 3v7l-3.500-3.500z" fill="#b4b4b4"/><path d="M24 3v7l3.500-3.500z" fill="#b4b4b4"/></svg>
<!-- p31_toolbox -->
<div class="a" style="left:0px;top:600px;width:15px;height:345px;background:#f0f0f0;"></div>
<div class="a" style="left:1px;top:614px;width:13px;height:329px;background:linear-gradient(#d8e5f4,#c0d1e6);"></div>
<svg style="left:3px;top:602px" width="8" height="8" viewBox="0 0 8 8"><path d="M1.300 1.500l5.400 5.400M6.700 1.500l-5.400 5.400" stroke="#000" stroke-width="1.600"/></svg>
<span class="t" style="left:1.800px;top:940px;font-size:12.500px;transform:rotate(-90deg) scaleX(0.8532);transform-origin:0 0;color:#000">Инструменты</span>
<div class="a" style="left:15px;top:600px;width:1902px;height:320px;background:#fff;border:1px solid #a0a0a0;border-bottom:none;border-right-color:#e4e4e4;"></div>
<div class="a" style="left:16px;top:644px;width:1900px;height:20px;background:#ebebeb;"></div>
<div class="a" style="left:16px;top:684px;width:1900px;height:20px;background:#ebebeb;"></div>
<div class="a" style="left:16px;top:644px;width:1900px;height:1px;background:#d4d4d4;"></div>
<div class="a" style="left:16px;top:664px;width:1900px;height:1px;background:#d4d4d4;"></div>
<div class="a" style="left:16px;top:684px;width:1900px;height:1px;background:#d4d4d4;"></div>
<div class="a" style="left:16px;top:704px;width:1900px;height:1px;background:#d4d4d4;"></div>
<div class="a" style="left:178px;top:601px;width:1px;height:103px;background:#e0e0e0;"></div>
<div class="a" style="left:291px;top:601px;width:1px;height:103px;background:#e0e0e0;"></div>
<div class="a" style="left:431px;top:601px;width:1px;height:103px;background:#e0e0e0;"></div>
<div class="a" style="left:556px;top:601px;width:1px;height:103px;background:#e0e0e0;"></div>
<div class="a" style="left:681px;top:601px;width:1px;height:103px;background:#e0e0e0;"></div>
<div class="a" style="left:806px;top:601px;width:1px;height:103px;background:#e0e0e0;"></div>
<div class="a" style="left:931px;top:601px;width:1px;height:103px;background:#e0e0e0;"></div>
<div class="a" style="left:1056px;top:601px;width:1px;height:103px;background:#e0e0e0;"></div>
<div class="a" style="left:1181px;top:601px;width:1px;height:103px;background:#e0e0e0;"></div>
<div class="a" style="left:1306px;top:601px;width:1px;height:103px;background:#e0e0e0;"></div>
<div class="a" style="left:1444px;top:601px;width:1px;height:103px;background:#e0e0e0;"></div>
<div class="a" style="left:1564px;top:601px;width:1px;height:103px;background:#e0e0e0;"></div>
<div class="a" style="left:16px;top:704px;width:1900px;height:21px;background:#c8c8c8;"></div>
<span class="t" style="left:22.00px;top:607.32px;font-size:12.5px;color:#000;transform:scaleX(0.9762);">Символ</span>
<span class="t" style="left:186.00px;top:607.32px;font-size:12.5px;color:#000;transform:scaleX(0.9393);">Тикет</span>
<span class="t" style="left:391.00px;top:607.32px;font-size:12.5px;color:#000;transform:scaleX(0.9574);">Время</span>
<span class="t" style="left:531.00px;top:607.32px;font-size:12.5px;color:#000;transform:scaleX(0.9598);">Тип</span>
<span class="t" style="left:608.00px;top:607.32px;font-size:12.5px;color:#000;transform:scaleX(0.9542);">Объем</span>
<span class="t" style="left:773.00px;top:607.32px;font-size:12.5px;color:#000;transform:scaleX(0.9317);">Цена</span>
<span class="t" style="left:903.00px;top:607.32px;font-size:12.5px;color:#000;transform:scaleX(0.8946);">S / L</span>
<span class="t" style="left:1027.00px;top:607.32px;font-size:12.5px;color:#000;transform:scaleX(0.8790);">T / P</span>
<span class="t" style="left:1148.00px;top:607.32px;font-size:12.5px;color:#000;transform:scaleX(0.9317);">Цена</span>
<span class="t" style="left:1273.00px;top:607.32px;font-size:12.5px;color:#000;transform:scaleX(0.9232);">Своп</span>
<span class="t" style="left:1387.00px;top:607.32px;font-size:12.5px;color:#000;transform:scaleX(0.9836);">Прибыль</span>
<span class="t" style="left:1496.00px;top:607.32px;font-size:12.5px;color:#000;transform:scaleX(0.9234);">ID эксперта</span>
<span class="t" style="left:1833.00px;top:607.32px;font-size:12.5px;color:#000;transform:scaleX(0.9780);">Комментарий</span>
<svg style="left:663px;top:609px" width="8" height="6" viewBox="0 0 8 6"><path d="M0.500 5l3.500-4 3.500 4z" fill="#000"/></svg>
<svg style="left:20px;top:626px" width="12" height="16" viewBox="0 0 12 16" fill="none" stroke="#1464ad"><rect x="0.500" y="1.500" width="10" height="14" rx="2" fill="#fff" stroke-width="1.200"/><path d="M4 5.500h3M4 8.500h3" stroke-width="1.100"/></svg>
<span class="t" style="left:37.00px;top:629.02px;font-size:12.5px;color:#000;transform:scaleX(0.9267);">audusd</span>
<span class="t" style="left:182.00px;top:629.02px;font-size:12.5px;color:#000;transform:scaleX(0.8631);">3637386408</span>
<span class="t" style="left:329.00px;top:629.02px;font-size:12.5px;color:#000;transform:scaleX(0.8632);">2025.04.15 22:50:00</span>
<span class="t" style="left:534.00px;top:629.02px;font-size:12.5px;color:#000;transform:scaleX(0.9428);">buy</span>
<span class="t" style="left:656.00px;top:629.02px;font-size:12.5px;color:#000;transform:scaleX(0.9043);">0.04</span>
<span class="t" style="left:764.00px;top:629.02px;font-size:12.5px;color:#000;transform:scaleX(0.8632);">0.63498</span>
<span class="t" style="left:1139.00px;top:629.02px;font-size:12.5px;color:#000;transform:scaleX(0.8632);">0.63482</span>
<span class="t" style="left:1398.00px;top:629.02px;font-size:12.5px;color:#e8212b;transform:scaleX(0.8775);">-0.64</span>
<svg style="left:1431px;top:630px" width="9" height="9" viewBox="0 0 9 9"><path d="M1.500 1.500l6 6M7.500 1.500l-6 6" stroke="#777" stroke-width="1.600"/></svg>
<span class="t" style="left:1554.00px;top:629.02px;font-size:12.5px;color:#000;transform:scaleX(0.8631);">1</span>
<span class="t" style="left:1755.00px;top:629.02px;font-size:12.5px;color:#000;transform:scaleX(0.9308);">старт: EA торговля спредами</span>
<svg style="left:20px;top:646px" width="12" height="16" viewBox="0 0 12 16" fill="none" stroke="#e03c31"><rect x="0.500" y="1.500" width="10" height="14" rx="2" fill="#fff" stroke-width="1.200"/><path d="M4 5.500h3M4 8.500h3" stroke-width="1.100"/></svg>
<span class="t" style="left:37.00px;top:649.02px;font-size:12.5px;color:#000;transform:scaleX(0.9267);">audusd</span>
<span class="t" style="left:182.00px;top:649.02px;font-size:12.5px;color:#000;transform:scaleX(0.8631);">3637387884</span>
<span class="t" style="left:329.00px;top:649.02px;font-size:12.5px;color:#000;transform:scaleX(0.8632);">2025.04.15 22:50:34</span>
<span class="t" style="left:535.00px;top:649.02px;font-size:12.5px;color:#000;transform:scaleX(0.9598);">sell</span>
<span class="t" style="left:656.00px;top:649.02px;font-size:12.5px;color:#000;transform:scaleX(0.9043);">0.04</span>
<span class="t" style="left:764.00px;top:649.02px;font-size:12.5px;color:#000;transform:scaleX(0.8632);">0.63479</span>
<span class="t" style="left:1139.00px;top:649.02px;font-size:12.5px;color:#000;transform:scaleX(0.8632);">0.63500</span>
<span class="t" style="left:1398.00px;top:649.02px;font-size:12.5px;color:#e8212b;transform:scaleX(0.8775);">-0.84</span>
<svg style="left:1431px;top:650px" width="9" height="9" viewBox="0 0 9 9"><path d="M1.500 1.500l6 6M7.500 1.500l-6 6" stroke="#777" stroke-width="1.600"/></svg>
<span class="t" style="left:1554.00px;top:649.02px;font-size:12.5px;color:#000;transform:scaleX(0.8631);">2</span>
<span class="t" style="left:1794.00px;top:649.02px;font-size:12.5px;color:#000;transform:scaleX(0.8900);">старт Reverse в селл 1</span>
<svg style="left:20px;top:666px" width="12" height="16" viewBox="0 0 12 16" fill="none" stroke="#1464ad"><rect x="0.500" y="1.500" width="10" height="14" rx="2" fill="#fff" stroke-width="1.200"/><path d="M4 5.500h3M4 8.500h3" stroke-width="1.100"/></svg>
<span class="t" style="left:37.00px;top:669.02px;font-size:12.5px;color:#000;transform:scaleX(0.9304);">usdcad</span>
<span class="t" style="left:182.00px;top:669.02px;font-size:12.5px;color:#000;transform:scaleX(0.8631);">3637386410</span>
<span class="t" style="left:329.00px;top:669.02px;font-size:12.5px;color:#000;transform:scaleX(0.8632);">2025.04.15 22:50:00</span>
<span class="t" style="left:534.00px;top:669.02px;font-size:12.5px;color:#000;transform:scaleX(0.9428);">buy</span>
<span class="t" style="left:656.00px;top:669.02px;font-size:12.5px;color:#000;transform:scaleX(0.9043);">0.04</span>
<span class="t" style="left:764.00px;top:669.02px;font-size:12.5px;color:#000;transform:scaleX(0.8632);">1.39669</span>
<span class="t" style="left:1139.00px;top:669.02px;font-size:12.5px;color:#000;transform:scaleX(0.8632);">1.39649</span>
<span class="t" style="left:1398.00px;top:669.02px;font-size:12.5px;color:#e8212b;transform:scaleX(0.8775);">-0.57</span>
<svg style="left:1431px;top:670px" width="9" height="9" viewBox="0 0 9 9"><path d="M1.500 1.500l6 6M7.500 1.500l-6 6" stroke="#777" stroke-width="1.600"/></svg>
<span class="t" style="left:1554.00px;top:669.02px;font-size:12.5px;color:#000;transform:scaleX(0.8631);">1</span>
<span class="t" style="left:1755.00px;top:669.02px;font-size:12.5px;color:#000;transform:scaleX(0.9308);">старт: EA торговля спредами</span>
<svg style="left:20px;top:686px" width="12" height="16" viewBox="0 0 12 16" fill="none" stroke="#e03c31"><rect x="0.500" y="1.500" width="10" height="14" rx="2" fill="#fff" stroke-width="1.200"/><path d="M4 5.500h3M4 8.500h3" stroke-width="1.100"/></svg>
<span class="t" style="left:37.00px;top:689.02px;font-size:12.5px;color:#000;transform:scaleX(0.9304);">usdcad</span>
<span class="t" style="left:182.00px;top:689.02px;font-size:12.5px;color:#000;transform:scaleX(0.8631);">3637387886</span>
<span class="t" style="left:329.00px;top:689.02px;font-size:12.5px;color:#000;transform:scaleX(0.8632);">2025.04.15 22:50:35</span>
<span class="t" style="left:535.00px;top:689.02px;font-size:12.5px;color:#000;transform:scaleX(0.9598);">sell</span>
<span class="t" style="left:656.00px;top:689.02px;font-size:12.5px;color:#000;transform:scaleX(0.9043);">0.04</span>
<span class="t" style="left:764.00px;top:689.02px;font-size:12.5px;color:#000;transform:scaleX(0.8632);">1.39647</span>
<span class="t" style="left:1139.00px;top:689.02px;font-size:12.5px;color:#000;transform:scaleX(0.8632);">1.39675</span>
<span class="t" style="left:1398.00px;top:689.02px;font-size:12.5px;color:#e8212b;transform:scaleX(0.8775);">-0.80</span>
<svg style="left:1431px;top:690px" width="9" height="9" viewBox="0 0 9 9"><path d="M1.500 1.500l6 6M7.500 1.500l-6 6" stroke="#777" stroke-width="1.600"/></svg>
<span class="t" style="left:1554.00px;top:689.02px;font-size:12.5px;color:#000;transform:scaleX(0.8631);">2</span>
<span class="t" style="left:1780.00px;top:689.02px;font-size:12.5px;color:#000;transform:scaleX(0.9097);">старт rev spread в селл 2</span>
<svg style="left:19px;top:708px" width="13" height="13" viewBox="0 0 13 13" fill="none" stroke="#000"><circle cx="6.500" cy="6.500" r="5" stroke-width="1.100"/><path d="M4 6.500h5" stroke-width="1.200"/></svg>
<span class="t" style="left:37.00px;top:709.32px;font-size:12.5px;color:#000;font-weight:bold;transform:scaleX(0.9318);">Баланс: 15 920.00 USD</span>
<span class="t" style="left:172.00px;top:709.32px;font-size:12.5px;color:#000;font-weight:bold;transform:scaleX(0.9249);">Средства: 15 917.15</span>
<span class="t" style="left:291.00px;top:709.32px;font-size:12.5px;color:#000;font-weight:bold;transform:scaleX(0.9640);">Маржа: 65.40</span>
<span class="t" style="left:374.00px;top:709.32px;font-size:12.5px;color:#000;font-weight:bold;transform:scaleX(0.9356);">Свободная маржа: 15 851.75</span>
<span class="t" style="left:544.00px;top:709.32px;font-size:12.5px;color:#000;font-weight:bold;transform:scaleX(0.9560);">Уровень маржи: 24 338.15 %</span>
<span class="t" style="left:1395.00px;top:709.32px;font-size:12.5px;color:#000;font-weight:bold;transform:scaleX(0.9652);">-2.85</span>
<div class="a" style="left:15px;top:919px;width:1902px;height:1px;background:#000;"></div>
<div class="a" style="left:15px;top:920px;width:1902px;height:24px;background:#f0f0f0;"></div>
<div class="a" style="left:18px;top:919px;width:71px;height:20px;background:#fff;border:1px solid #000;border-top:none;"></div>
<span class="t" style="left:28.00px;top:922.82px;font-size:12.5px;color:#000;transform:scaleX(0.9767);">Торговля</span>
<span class="t" style="left:99.00px;top:922.82px;font-size:12.5px;color:#6e6e6e;transform:scaleX(0.9697);">Активы</span>
<span class="t" style="left:160.00px;top:922.82px;font-size:12.5px;color:#6e6e6e;transform:scaleX(0.9696);">История</span>
<span class="t" style="left:227.00px;top:922.82px;font-size:12.5px;color:#6e6e6e;transform:scaleX(0.9713);">Новости</span>
<span class="t" style="left:294.00px;top:922.82px;font-size:12.5px;color:#6e6e6e;transform:scaleX(0.9796);">Почта</span>
<span class="t" style="left:355.00px;top:922.82px;font-size:12.5px;color:#6e6e6e;transform:scaleX(0.9193);">Календарь</span>
<span class="t" style="left:433.00px;top:922.82px;font-size:12.5px;color:#6e6e6e;transform:scaleX(0.9790);">Компания</span>
<span class="t" style="left:509.00px;top:922.82px;font-size:12.5px;color:#6e6e6e;transform:scaleX(0.9552);">Алерты</span>
<span class="t" style="left:571.00px;top:922.82px;font-size:12.5px;color:#6e6e6e;transform:scaleX(0.9134);">Статьи</span>
<span class="t" style="left:628.00px;top:922.82px;font-size:12.5px;color:#6e6e6e;transform:scaleX(0.9563);">Библиотека</span>
<span class="t" style="left:713.00px;top:922.82px;font-size:12.5px;color:#6e6e6e;transform:scaleX(0.9473);">Эксперты</span>
<span class="t" style="left:786.00px;top:922.82px;font-size:12.5px;color:#6e6e6e;transform:scaleX(0.9647);">Журнал</span>
<div class="a" style="left:150px;top:923px;width:1px;height:14px;background:#505050;"></div>
<div class="a" style="left:217px;top:923px;width:1px;height:14px;background:#505050;"></div>
<div class="a" style="left:284px;top:923px;width:1px;height:14px;background:#505050;"></div>
<div class="a" style="left:345px;top:923px;width:1px;height:14px;background:#505050;"></div>
<div class="a" style="left:423px;top:923px;width:1px;height:14px;background:#505050;"></div>
<div class="a" style="left:499px;top:923px;width:1px;height:14px;background:#505050;"></div>
<div class="a" style="left:561px;top:923px;width:1px;height:14px;background:#505050;"></div>
<div class="a" style="left:618px;top:923px;width:1px;height:14px;background:#505050;"></div>
<div class="a" style="left:703px;top:923px;width:1px;height:14px;background:#505050;"></div>
<div class="a" style="left:776px;top:923px;width:1px;height:14px;background:#505050;"></div>
<span class="t" style="left:330.00px;top:929.70px;font-size:8.5px;color:#e8212b;font-weight:bold;">8</span>
<svg style="left:1714px;top:923px" width="200" height="18" viewBox="0 0 200 18" fill="none"><path d="M5.300 5a2.700 2.700 0 0 1 5.400 0" stroke="#b8860b" stroke-width="1.300"/><path d="M3 6.500h10l.700 9h-11.400z" fill="#f9ca0a" stroke="#e6a800" stroke-width="0.800"/><circle cx="80" cy="8.500" r="1.300" stroke="#b4b4b4"/><path d="M77.300 6a3.800 3.800 0 0 0 0 5M82.700 6a3.800 3.800 0 0 1 0 5M75 4.300a6.500 6.500 0 0 0 0 8.400M85 4.300a6.500 6.500 0 0 1 0 8.400" stroke="#b4b4b4"/><path d="M158 11.500h8.500a2.600 2.600 0 0 0 .300-5.200 4.200 4.200 0 0 0-8.200-1 3.100 3.100 0 0 0-.600 6.200z" stroke="#1464ad" stroke-width="1.300"/><path d="M162 11.500v3M157 14.500h10" stroke="#1464ad" stroke-width="1.300"/></svg>
<span class="t" style="left:1733.00px;top:926.32px;font-size:12.5px;color:#000;transform:scaleX(0.9687);">Маркет</span>
<span class="t" style="left:1807.00px;top:926.32px;font-size:12.5px;color:#a8a8a8;transform:scaleX(0.9467);">Сигналы</span>
<span class="t" style="left:1887.00px;top:926.32px;font-size:12.5px;color:#000;transform:scaleX(0.7996);">VPS</span>
<div class="a" style="left:0px;top:944px;width:1920px;height:1px;background:#f0f0f0;"></div>
<!-- p32_tester -->
<div class="a" style="left:0px;top:946px;width:1920px;height:72px;background:#f0f0f0;"></div>
<div class="a" style="left:0px;top:945px;width:1920px;height:1px;background:#a0a0a0;"></div>
<div class="a" style="left:0px;top:946px;width:1920px;height:1px;background:#fff;"></div>
<div class="a" style="left:1px;top:963px;width:13px;height:50px;background:linear-gradient(#d8e5f4,#c6d6ea);"></div>
<svg style="left:3px;top:952px" width="8" height="8" viewBox="0 0 8 8"><path d="M1.300 1.500l5.400 5.400M6.700 1.500l-5.400 5.400" stroke="#000" stroke-width="1.600"/></svg>
<span class="t" style="left:1.800px;top:1010.500px;font-size:12.500px;transform:rotate(-90deg) scaleX(0.8444);transform-origin:0 0;color:#000">Тестер ст</span>
<div class="a" style="left:15px;top:950px;width:1902px;height:41px;background:#fff;border:1px solid #a0a0a0;border-bottom:none;border-right-color:#e4e4e4;"></div>
<div class="a" style="left:15px;top:990px;width:1902px;height:1px;background:#000;"></div>
<div class="a" style="left:1900px;top:951px;width:16px;height:39px;background:#f0f0f0;"></div>
<svg style="left:1900px;top:951px" width="16" height="39" viewBox="0 0 16 39" fill="none" stroke="#505050" stroke-width="1.500"><path d="M4.500 10.500l3.500-3.500 3.500 3.500M4.500 27.500l3.500 3.500 3.500-3.500"/></svg>
<span class="t" style="left:91.00px;top:964.32px;font-size:12.5px;color:#000;transform:scaleX(0.9033);">Советник:</span>
<div class="a" style="left:150px;top:959px;width:600px;height:21px;background:#e1e1e1;border:1px solid #adadad;"></div>
<span class="t" style="left:154.00px;top:964.32px;font-size:12.5px;color:#000;transform:scaleX(0.8789);">Advisors\EA торговля спредами - отбой на мартине в две стороны v.2.0.ex5</span>
<svg style="left:735px;top:965px" width="12" height="8" viewBox="0 0 12 8" fill="none" stroke="#333" stroke-width="1.200"><path d="M2 2l4 4 4-4"/></svg>
<div class="a" style="left:758px;top:959px;width:21px;height:21px;background:#e1e1e1;border:1px solid #adadad;"></div>
<span class="t" style="left:763.00px;top:964.21px;font-size:10.5px;color:#0a5aa0;font-weight:bold;transform:scaleX(0.7999);">IDE</span>
<div class="a" style="left:787px;top:959px;width:21px;height:21px;background:#e1e1e1;border:1px solid #adadad;"></div>
<svg style="left:789px;top:961px" width="17" height="17" viewBox="0 0 17 17" fill="none" stroke="#1464ad" stroke-width="1.300"><path d="M6.99 2.07L10.01 2.07L10.01 3.84L11.78 4.86L13.31 3.98L14.82 6.59L13.29 7.48L13.29 9.52L14.82 10.41L13.31 13.02L11.78 12.14L10.01 13.16L10.01 14.93L6.99 14.93L6.99 13.16L5.22 12.14L3.69 13.02L2.18 10.41L3.71 9.52L3.71 7.48L2.18 6.59L3.69 3.98L5.22 4.86L6.99 3.84Z" fill="#bfe0fb" stroke-linejoin="round"/><circle cx="8.500" cy="8.500" r="2.200" fill="#e1e1e1"/></svg>
<span class="t" style="left:1392.00px;top:948.47px;font-size:20px;color:#b9b9b9;">Активация Windows</span>
<span class="t" style="left:1392.00px;top:973.20px;font-size:15px;color:#b9b9b9;">Чтобы активировать Windows, перейдите в раздел &quot;Параметры&quot;.</span>
<div class="a" style="left:73px;top:990px;width:80px;height:20px;background:#fff;border:1px solid #000;border-top:none;"></div>
<span class="t" style="left:83.00px;top:994.02px;font-size:12.5px;color:#000;transform:scaleX(0.9789);">Настройки</span>
<span class="t" style="left:28.00px;top:994.02px;font-size:12.5px;color:#6e6e6e;transform:scaleX(0.9695);">Обзор</span>
<span class="t" style="left:163.00px;top:994.02px;font-size:12.5px;color:#6e6e6e;transform:scaleX(0.9605);">Параметры</span>
<span class="t" style="left:247.00px;top:994.02px;font-size:12.5px;color:#6e6e6e;transform:scaleX(0.9172);">Бэктест</span>
<span class="t" style="left:308.00px;top:994.02px;font-size:12.5px;color:#6e6e6e;transform:scaleX(0.9600);">График</span>
<span class="t" style="left:369.00px;top:994.02px;font-size:12.5px;color:#6e6e6e;transform:scaleX(0.9570);">Оптимизация</span>
<span class="t" style="left:464.00px;top:994.02px;font-size:12.5px;color:#6e6e6e;transform:scaleX(0.9712);">Агенты</span>
<span class="t" style="left:524.00px;top:994.02px;font-size:12.5px;color:#6e6e6e;transform:scaleX(0.9647);">Журнал</span>
<div class="a" style="left:237px;top:994px;width:1px;height:14px;background:#505050;"></div>
<div class="a" style="left:298px;top:994px;width:1px;height:14px;background:#505050;"></div>
<div class="a" style="left:359px;top:994px;width:1px;height:14px;background:#505050;"></div>
<div class="a" style="left:454px;top:994px;width:1px;height:14px;background:#505050;"></div>
<div class="a" style="left:514px;top:994px;width:1px;height:14px;background:#505050;"></div>
<span class="t" style="left:1730.00px;top:997.32px;font-size:12.5px;color:#000;transform:scaleX(0.8818);">02:51:59 / 02:52:09</span>
<div class="a" style="left:1834px;top:993px;width:81px;height:18px;background:#9ccc65;"></div>
<span class="t" style="left:1859.00px;top:997.32px;font-size:12.5px;color:#000;transform:scaleX(0.9127);">Старт</span>
<div class="a" style="left:0px;top:1015px;width:1920px;height:1px;background:#c4c4c4;"></div>
<div class="a" style="left:0px;top:1016px;width:1920px;height:1px;background:#fcfcfc;"></div>
<div class="a" style="left:0px;top:1017px;width:1920px;height:23px;background:#f0f0f0;"></div>
<span class="t" style="left:2.00px;top:1024.02px;font-size:12.5px;color:#000;transform:scaleX(0.9419);">Для вызова справки нажмите F1</span>
<div class="a" style="left:1208px;top:1021px;width:1px;height:17px;background:#a0a0a0;"></div>
<div class="a" style="left:1355px;top:1021px;width:1px;height:17px;background:#a0a0a0;"></div>
<div class="a" style="left:1453px;top:1021px;width:1px;height:17px;background:#a0a0a0;"></div>
<div class="a" style="left:1525px;top:1021px;width:1px;height:17px;background:#a0a0a0;"></div>
<div class="a" style="left:1595px;top:1021px;width:1px;height:17px;background:#a0a0a0;"></div>
<div class="a" style="left:1663px;top:1021px;width:1px;height:17px;background:#a0a0a0;"></div>
<div class="a" style="left:1733px;top:1021px;width:1px;height:17px;background:#a0a0a0;"></div>
<div class="a" style="left:1800px;top:1021px;width:1px;height:17px;background:#a0a0a0;"></div>
<span class="t" style="left:1215.00px;top:1024.02px;font-size:12.5px;color:#000;transform:scaleX(0.9342);">Default</span>
<svg style="left:1805px;top:1023px" width="15" height="12" viewBox="0 0 15 12" stroke="#2a9a2a" stroke-width="1.500"><path d="M1 11v-2M4 11v-4M7 11v-6M10 11v-8M13 11v-10.500"/></svg>
<span class="t" style="left:1826.00px;top:1024.02px;font-size:12.5px;color:#000;transform:scaleX(0.9143);">127 / 3 Mb</span>
</body></html>
